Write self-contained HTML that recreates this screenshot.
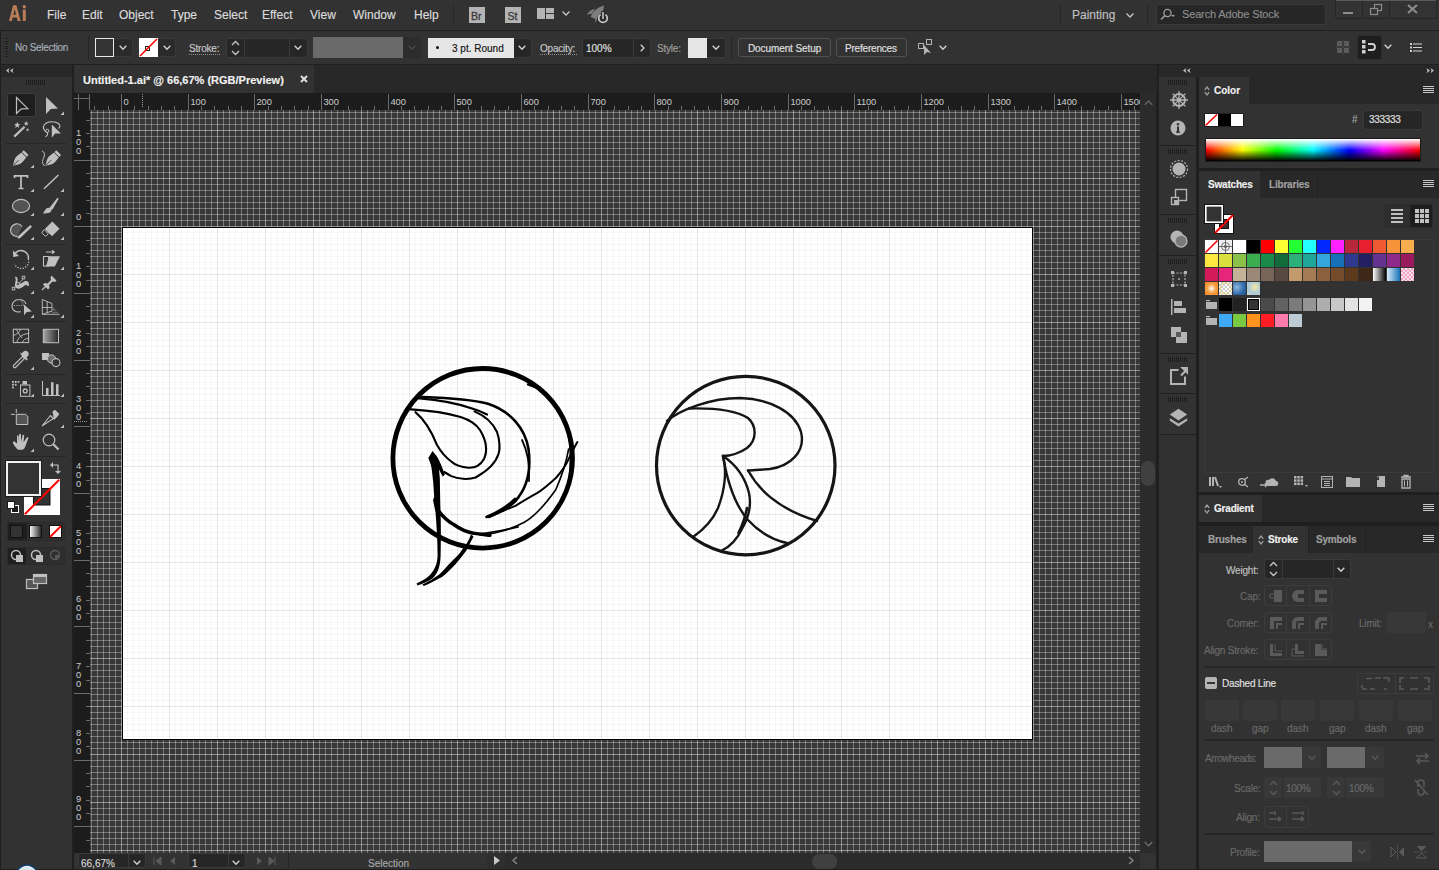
<!DOCTYPE html><html><head><meta charset="utf-8"><style>
*{margin:0;padding:0;box-sizing:border-box}
html,body{width:1439px;height:870px;overflow:hidden;background:#1f1f1f;font-family:"Liberation Sans",sans-serif}
.a{position:absolute}
.t{position:absolute;white-space:nowrap;line-height:1;-webkit-text-stroke:0.15px currentColor}
svg{position:absolute;overflow:visible}
.dd{position:absolute;border:1px solid #3c3c3c;border-radius:3px;background:#282828}
</style></head><body><div class="a" style="left:0px;top:0px;width:1439px;height:30px;background:#323232"></div>
<svg style="left:0px;top:0px;" width="30" height="30" viewBox="0 0 30 30"><path d="M9 21L13.1 5.2H16.4L20.7 21H17.7L16.8 17.4H12.7L11.8 21Z M13.4 14.7H16.1L14.75 8.9Z" fill="#b97d58" fill-rule="evenodd"/><rect x="22.8" y="9.6" width="3" height="11.4" fill="#b97d58"/><circle cx="24.3" cy="6.7" r="1.7" fill="#b97d58"/></svg>
<div class="t" style="left:47px;top:9px;font-size:12px;color:#dcdcdc">File</div>
<div class="t" style="left:82px;top:9px;font-size:12px;color:#dcdcdc">Edit</div>
<div class="t" style="left:119px;top:9px;font-size:12px;color:#dcdcdc">Object</div>
<div class="t" style="left:171px;top:9px;font-size:12px;color:#dcdcdc">Type</div>
<div class="t" style="left:214px;top:9px;font-size:12px;color:#dcdcdc">Select</div>
<div class="t" style="left:262px;top:9px;font-size:12px;color:#dcdcdc">Effect</div>
<div class="t" style="left:310px;top:9px;font-size:12px;color:#dcdcdc">View</div>
<div class="t" style="left:353px;top:9px;font-size:12px;color:#dcdcdc">Window</div>
<div class="t" style="left:414px;top:9px;font-size:12px;color:#dcdcdc">Help</div>
<div class="a" style="left:453px;top:5px;width:1px;height:19px;background:#262626"></div>
<div class="a" style="left:469px;top:7px;width:16px;height:16px;background:#b4b4b4"><div class="t" style="left:2px;top:4px;font-size:10.5px;color:#3a3a3a;-webkit-text-stroke:0.3px #3a3a3a">Br</div></div>
<div class="a" style="left:505px;top:7px;width:16px;height:16px;background:#b4b4b4"><div class="t" style="left:2.5px;top:4px;font-size:10.5px;color:#3a3a3a;-webkit-text-stroke:0.3px #3a3a3a">St</div></div>
<svg style="left:537px;top:8px;" width="18" height="12" viewBox="0 0 18 12"><rect x="0" y="0" width="8" height="11" fill="#b4b4b4"/><rect x="9" y="0" width="8" height="5" fill="#b4b4b4"/><rect x="9" y="6" width="8" height="5" fill="#b4b4b4"/></svg>
<svg style="left:562px;top:11px;" width="8" height="5" viewBox="0 0 8 5"><path d="M0.5 0.5L4 4L7.5 0.5" stroke="#c8c8c8" stroke-width="1.3" fill="none"/></svg>
<svg style="left:0px;top:0px;" width="620" height="30" viewBox="0 0 620 30"><path d="M590.5 17C592.5 12 597.5 7 604.2 5.6C603.5 11 600.5 15.5 596 19Z" fill="#7e7e7e"/><path d="M586.8 14.8C588.8 11.5 591.5 9.3 595 9L592 13.5Z" fill="#7e7e7e"/><path d="M594.8 23L597.6 18.3L595.6 17.2Z" fill="#7e7e7e"/><circle cx="603" cy="18.6" r="5.6" fill="#2a2a2a"/><path d="M600.6 14.6A4.3 4.3 0 1 0 605.4 14.6" fill="none" stroke="#c8c8c8" stroke-width="1.7"/><rect x="601.2" y="11" width="3.6" height="9" fill="#2a2a2a"/><rect x="602.2" y="12" width="1.6" height="7" fill="#c8c8c8"/></svg>
<div class="a" style="left:1060px;top:5px;width:1px;height:19px;background:#262626"></div>
<div class="t" style="left:1072px;top:9px;font-size:12px;color:#c0c0c0">Painting</div>
<svg style="left:1126px;top:13px;" width="8" height="5" viewBox="0 0 8 5"><path d="M0.5 0.5L4 4L7.5 0.5" stroke="#c8c8c8" stroke-width="1.3" fill="none"/></svg>
<div class="a" style="left:1147px;top:5px;width:1px;height:19px;background:#262626"></div>
<div class="a" style="left:1156px;top:4px;width:170px;height:21px;background:#262626;border:1px solid #3a3a3a;border-radius:3px"></div>
<svg style="left:1160px;top:8px;" width="16" height="13" viewBox="0 0 16 13"><circle cx="7.5" cy="5" r="3.6" fill="none" stroke="#a0a0a0" stroke-width="1.3"/><path d="M5 7.5L1 11.5" stroke="#a0a0a0" stroke-width="1.6"/><path d="M11 7L15 7L13 9Z" fill="#a0a0a0"/></svg>
<div class="t" style="left:1182px;top:9px;font-size:11px;color:#8c8c8c;letter-spacing:-0.15px">Search Adobe Stock</div>
<div class="a" style="left:1335px;top:0px;width:102px;height:19px;background:#333;border:1px solid #262626;border-top:none;border-radius:0 0 3px 3px"></div>
<div class="a" style="left:1336px;top:0px;width:100px;height:1px;background:#5a5a5a"></div>
<div class="a" style="left:1362px;top:1px;width:1px;height:17px;background:#262626"></div>
<div class="a" style="left:1389px;top:1px;width:1px;height:17px;background:#262626"></div>
<div class="a" style="left:1343px;top:12px;width:10px;height:2px;background:#8c8c8c"></div>
<svg style="left:1370px;top:4px;" width="13" height="11" viewBox="0 0 13 11"><rect x="4.5" y="0.5" width="7" height="6" fill="none" stroke="#8c8c8c" stroke-width="1.2"/><rect x="0.5" y="4.5" width="7" height="6" fill="#333" stroke="#8c8c8c" stroke-width="1.2"/></svg>
<svg style="left:1407px;top:4px;" width="11" height="10" viewBox="0 0 11 10"><path d="M1 1L10 9M10 1L1 9" stroke="#8c8c8c" stroke-width="2"/></svg>
<div class="a" style="left:0px;top:30px;width:1439px;height:1px;background:#1f1f1f"></div>
<div class="a" style="left:1px;top:31px;width:1438px;height:33px;background:#323232"></div>
<div class="a" style="left:5px;top:38.0px;width:3px;height:1px;background:#1e1e1e"></div>
<div class="a" style="left:5px;top:40.5px;width:3px;height:1px;background:#1e1e1e"></div>
<div class="a" style="left:5px;top:43.0px;width:3px;height:1px;background:#1e1e1e"></div>
<div class="a" style="left:5px;top:45.5px;width:3px;height:1px;background:#1e1e1e"></div>
<div class="a" style="left:5px;top:48.0px;width:3px;height:1px;background:#1e1e1e"></div>
<div class="a" style="left:5px;top:50.5px;width:3px;height:1px;background:#1e1e1e"></div>
<div class="a" style="left:5px;top:53.0px;width:3px;height:1px;background:#1e1e1e"></div>
<div class="a" style="left:5px;top:55.5px;width:3px;height:1px;background:#1e1e1e"></div>
<div class="t" style="left:15px;top:43px;font-size:10px;color:#a8b0b8;letter-spacing:-0.3px">No Selection</div>
<div class="a" style="left:88px;top:36px;width:1px;height:24px;background:#262626"></div>
<div class="a" style="left:95px;top:38px;width:38px;height:19px;background:#2a2a2a;border:1px solid #3a3a3a;border-radius:2px"></div>
<div class="a" style="left:95px;top:38px;width:19px;height:19px;background:#333;border:1px solid #e8e8e8"></div>
<svg style="left:119px;top:45px;" width="8" height="5" viewBox="0 0 8 5"><path d="M0.7 0.7L4.0 4.2L7.3 0.7" stroke="#d0d0d0" stroke-width="1.4" fill="none"/></svg>
<div class="a" style="left:138px;top:38px;width:38px;height:19px;background:#2a2a2a;border:1px solid #3a3a3a;border-radius:2px"></div>
<div class="a" style="left:139px;top:38px;width:19px;height:19px;background:#fff"></div>
<svg style="left:139px;top:38px;" width="19" height="19" viewBox="0 0 19 19"><rect x="6.5" y="8.5" width="4" height="4" fill="none" stroke="#222" stroke-width="1"/><path d="M1 18L18 1" stroke="#f00" stroke-width="1.6"/></svg>
<svg style="left:163px;top:45px;" width="8" height="5" viewBox="0 0 8 5"><path d="M0.7 0.7L4.0 4.2L7.3 0.7" stroke="#d0d0d0" stroke-width="1.4" fill="none"/></svg>
<div class="t" style="left:189px;top:44px;font-size:10px;color:#c8c8c8;letter-spacing:-0.2px">Stroke:</div>
<div class="a" style="left:189px;top:54px;width:31px;height:1px;border-top:1px dotted #909090"></div>
<div class="a" style="left:226px;top:38px;width:82px;height:20px;background:#262626;border:1px solid #3a3a3a;border-radius:2px"></div>
<div class="a" style="left:244px;top:39px;width:1px;height:18px;background:#3a3a3a"></div>
<div class="a" style="left:289px;top:39px;width:1px;height:18px;background:#3a3a3a"></div>
<svg style="left:231px;top:40px;" width="9" height="16" viewBox="0 0 9 16"><path d="M1 5L4.5 1.5L8 5M1 11L4.5 14.5L8 11" stroke="#c8c8c8" stroke-width="1.3" fill="none"/></svg>
<svg style="left:294px;top:45px;" width="8" height="5" viewBox="0 0 8 5"><path d="M0.7 0.7L4.0 4.2L7.3 0.7" stroke="#d0d0d0" stroke-width="1.4" fill="none"/></svg>
<div class="a" style="left:313px;top:37px;width:108px;height:21px;background:#2c2c2c;border-radius:2px"></div>
<div class="a" style="left:313px;top:37px;width:90px;height:21px;background:#6a6a6a"></div>
<svg style="left:408px;top:45px;" width="8" height="5" viewBox="0 0 8 5"><path d="M0.7 0.7L4.0 4.2L7.3 0.7" stroke="#4a4a4a" stroke-width="1.4" fill="none"/></svg>
<div class="a" style="left:427px;top:38px;width:105px;height:20px;background:#262626;border:1px solid #3a3a3a;border-radius:2px"></div>
<div class="a" style="left:428px;top:38px;width:86px;height:20px;background:#e6e6e6"></div>
<div class="a" style="left:436px;top:46px;width:3px;height:3px;background:#111;border-radius:2px"></div>
<div class="t" style="left:452px;top:44px;font-size:10px;color:#111">3 pt. Round</div>
<svg style="left:518px;top:45px;" width="8" height="5" viewBox="0 0 8 5"><path d="M0.7 0.7L4.0 4.2L7.3 0.7" stroke="#d0d0d0" stroke-width="1.4" fill="none"/></svg>
<div class="t" style="left:540px;top:44px;font-size:10px;color:#c8c8c8;letter-spacing:-0.2px">Opacity:</div>
<div class="a" style="left:540px;top:54px;width:37px;height:1px;border-top:1px dotted #909090"></div>
<div class="a" style="left:582px;top:38px;width:69px;height:20px;background:#262626;border:1px solid #3a3a3a;border-radius:2px"></div>
<div class="a" style="left:633px;top:39px;width:1px;height:18px;background:#3a3a3a"></div>
<div class="t" style="left:586px;top:44px;font-size:10px;color:#e0e0e0">100%</div>
<svg style="left:640px;top:44px;" width="5" height="8" viewBox="0 0 5 8"><path d="M0.7 0.7L4 4L0.7 7.3" stroke="#d0d0d0" stroke-width="1.3" fill="none"/></svg>
<div class="t" style="left:657px;top:44px;font-size:10px;color:#a0a0a0;letter-spacing:-0.2px">Style:</div>
<div class="a" style="left:687px;top:38px;width:39px;height:20px;background:#262626;border:1px solid #3a3a3a;border-radius:2px"></div>
<div class="a" style="left:688px;top:38px;width:19px;height:20px;background:#e6e6e6"></div>
<svg style="left:712px;top:45px;" width="8" height="5" viewBox="0 0 8 5"><path d="M0.7 0.7L4.0 4.2L7.3 0.7" stroke="#d0d0d0" stroke-width="1.4" fill="none"/></svg>
<div class="a" style="left:731px;top:36px;width:1px;height:24px;background:#262626"></div>
<div class="a" style="left:738px;top:38px;width:93px;height:19px;border:1px solid #505050;border-radius:3px"></div>
<div class="t" style="left:748px;top:44px;font-size:10px;color:#e0e0e0;letter-spacing:-0.1px">Document Setup</div>
<div class="a" style="left:836px;top:38px;width:71px;height:19px;border:1px solid #505050;border-radius:3px"></div>
<div class="t" style="left:845px;top:44px;font-size:10px;color:#e0e0e0;letter-spacing:-0.2px">Preferences</div>
<svg style="left:917px;top:38px;" width="18" height="18" viewBox="0 0 18 18"><rect x="1.5" y="5.5" width="5" height="5" fill="none" stroke="#b4b4b4"/><rect x="9.5" y="1.5" width="5" height="5" fill="none" stroke="#b4b4b4"/><path d="M7 7L7 17L10 14L14 15Z" fill="#b4b4b4"/></svg>
<svg style="left:939px;top:45px;" width="8" height="5" viewBox="0 0 8 5"><path d="M0.7 0.7L4.0 4.2L7.3 0.7" stroke="#d0d0d0" stroke-width="1.4" fill="none"/></svg>
<svg style="left:1335px;top:39px;" width="16" height="16" viewBox="0 0 16 16"><rect x="2" y="2" width="5" height="5" fill="#5c5c5c"/><rect x="9" y="2" width="5" height="5" fill="#5c5c5c"/><rect x="2" y="9" width="5" height="5" fill="#5c5c5c"/><rect x="9" y="9" width="5" height="5" fill="#5c5c5c"/><path d="M8 0V16M0 8H16" stroke="#4a4a4a" stroke-width="0.8"/></svg>
<div class="a" style="left:1357px;top:35px;width:25px;height:25px;background:#1e1e1e;border:1px solid #2c2c2c;border-radius:3px"></div>
<svg style="left:1361px;top:39px;" width="16" height="16" viewBox="0 0 16 16"><rect x="1" y="1" width="3.5" height="3.5" fill="#d0d0d0"/><rect x="1" y="6" width="3.5" height="3.5" fill="#d0d0d0"/><rect x="1" y="11" width="3.5" height="3.5" fill="#d0d0d0"/><path d="M7 5H11A3 3 0 0 1 11 11H7" stroke="#d0d0d0" stroke-width="1.8" fill="none"/></svg>
<svg style="left:1384px;top:44px;" width="8" height="5" viewBox="0 0 8 5"><path d="M0.7 0.7L4.0 4.2L7.3 0.7" stroke="#d0d0d0" stroke-width="1.4" fill="none"/></svg>
<svg style="left:1410px;top:43px;" width="12" height="9" viewBox="0 0 12 9"><rect x="0" y="0" width="2" height="2" fill="#d0d0d0"/><rect x="0" y="3.5" width="2" height="2" fill="#d0d0d0"/><rect x="0" y="7" width="2" height="2" fill="#d0d0d0"/><path d="M3 1H12M3 4.5H12M3 8H12" stroke="#d0d0d0" stroke-width="1"/></svg>
<div class="a" style="left:74px;top:65px;width:1083px;height:28px;background:#282828"></div>
<div class="a" style="left:74px;top:65px;width:240px;height:28px;background:#323232"></div>
<div class="t" style="left:83px;top:75px;font-size:11px;font-weight:bold;color:#f0f0f0">Untitled-1.ai* @ 66,67% (RGB/Preview)</div>
<svg style="left:300px;top:75px;" width="8" height="8" viewBox="0 0 8 8"><path d="M1 1L7 7M7 1L1 7" stroke="#e0e0e0" stroke-width="2"/></svg>
<div class="a" style="left:74px;top:93px;width:1066px;height:17px;background:#1c1c1c"></div>
<div class="a" style="left:74px;top:110px;width:16px;height:743px;background:#1c1c1c"></div>
<svg style="left:74px;top:93px;" width="17" height="17" viewBox="0 0 17 17"><path d="M4.5 1V17M15.5 1V17M0 5.5H16" stroke="#6c6c6c" stroke-width="1" fill="none"/></svg>
<div class="a" style="left:1140px;top:93px;width:16px;height:760px;background:#2b2b2b"></div>
<svg style="left:1144px;top:100px;" width="9" height="6" viewBox="0 0 9 6"><path d="M0.7 4.8L4.5 1L8.3 4.8" stroke="#707070" stroke-width="1.2" fill="none"/></svg>
<svg style="left:1144px;top:841px;" width="9" height="6" viewBox="0 0 9 6"><path d="M0.7 1L4.5 4.8L8.3 1" stroke="#707070" stroke-width="1.2" fill="none"/></svg>
<div class="a" style="left:1141px;top:461px;width:14px;height:25px;background:#404040;border-radius:7px"></div>
<svg style="left:90px;top:110px;overflow:hidden" width="1050" height="743" viewBox="0 0 1050 743"><rect width="1050" height="743" fill="#373737"/><path d="M1.5 0V743M7.5 0V743M13.5 0V743M19.5 0V743M25.5 0V743M37.5 0V743M43.5 0V743M49.5 0V743M55.5 0V743M61.5 0V743M67.5 0V743M73.5 0V743M85.5 0V743M91.5 0V743M97.5 0V743M103.5 0V743M109.5 0V743M115.5 0V743M121.5 0V743M133.5 0V743M139.5 0V743M145.5 0V743M151.5 0V743M157.5 0V743M163.5 0V743M169.5 0V743M181.5 0V743M187.5 0V743M193.5 0V743M199.5 0V743M205.5 0V743M211.5 0V743M217.5 0V743M229.5 0V743M235.5 0V743M241.5 0V743M247.5 0V743M253.5 0V743M259.5 0V743M265.5 0V743M277.5 0V743M283.5 0V743M289.5 0V743M295.5 0V743M301.5 0V743M307.5 0V743M313.5 0V743M325.5 0V743M331.5 0V743M337.5 0V743M343.5 0V743M349.5 0V743M355.5 0V743M361.5 0V743M373.5 0V743M379.5 0V743M385.5 0V743M391.5 0V743M397.5 0V743M403.5 0V743M409.5 0V743M421.5 0V743M427.5 0V743M433.5 0V743M439.5 0V743M445.5 0V743M451.5 0V743M457.5 0V743M469.5 0V743M475.5 0V743M481.5 0V743M487.5 0V743M493.5 0V743M499.5 0V743M505.5 0V743M517.5 0V743M523.5 0V743M529.5 0V743M535.5 0V743M541.5 0V743M547.5 0V743M553.5 0V743M565.5 0V743M571.5 0V743M577.5 0V743M583.5 0V743M589.5 0V743M595.5 0V743M601.5 0V743M613.5 0V743M619.5 0V743M625.5 0V743M631.5 0V743M637.5 0V743M643.5 0V743M649.5 0V743M661.5 0V743M667.5 0V743M673.5 0V743M679.5 0V743M685.5 0V743M691.5 0V743M697.5 0V743M709.5 0V743M715.5 0V743M721.5 0V743M727.5 0V743M733.5 0V743M739.5 0V743M745.5 0V743M757.5 0V743M763.5 0V743M769.5 0V743M775.5 0V743M781.5 0V743M787.5 0V743M793.5 0V743M805.5 0V743M811.5 0V743M817.5 0V743M823.5 0V743M829.5 0V743M835.5 0V743M841.5 0V743M853.5 0V743M859.5 0V743M865.5 0V743M871.5 0V743M877.5 0V743M883.5 0V743M889.5 0V743M901.5 0V743M907.5 0V743M913.5 0V743M919.5 0V743M925.5 0V743M931.5 0V743M937.5 0V743M949.5 0V743M955.5 0V743M961.5 0V743M967.5 0V743M973.5 0V743M979.5 0V743M985.5 0V743M997.5 0V743M1003.5 0V743M1009.5 0V743M1015.5 0V743M1021.5 0V743M1027.5 0V743M1033.5 0V743M1045.5 0V743" stroke="rgba(255,255,255,0.32)" stroke-width="1"/><path d="M0 2.5H1050M0 8.5H1050M0 14.5H1050M0 26.5H1050M0 32.5H1050M0 38.5H1050M0 44.5H1050M0 50.5H1050M0 56.5H1050M0 62.5H1050M0 74.5H1050M0 80.5H1050M0 86.5H1050M0 92.5H1050M0 98.5H1050M0 104.5H1050M0 110.5H1050M0 122.5H1050M0 128.5H1050M0 134.5H1050M0 140.5H1050M0 146.5H1050M0 152.5H1050M0 158.5H1050M0 170.5H1050M0 176.5H1050M0 182.5H1050M0 188.5H1050M0 194.5H1050M0 200.5H1050M0 206.5H1050M0 218.5H1050M0 224.5H1050M0 230.5H1050M0 236.5H1050M0 242.5H1050M0 248.5H1050M0 254.5H1050M0 266.5H1050M0 272.5H1050M0 278.5H1050M0 284.5H1050M0 290.5H1050M0 296.5H1050M0 302.5H1050M0 314.5H1050M0 320.5H1050M0 326.5H1050M0 332.5H1050M0 338.5H1050M0 344.5H1050M0 350.5H1050M0 362.5H1050M0 368.5H1050M0 374.5H1050M0 380.5H1050M0 386.5H1050M0 392.5H1050M0 398.5H1050M0 410.5H1050M0 416.5H1050M0 422.5H1050M0 428.5H1050M0 434.5H1050M0 440.5H1050M0 446.5H1050M0 458.5H1050M0 464.5H1050M0 470.5H1050M0 476.5H1050M0 482.5H1050M0 488.5H1050M0 494.5H1050M0 506.5H1050M0 512.5H1050M0 518.5H1050M0 524.5H1050M0 530.5H1050M0 536.5H1050M0 542.5H1050M0 554.5H1050M0 560.5H1050M0 566.5H1050M0 572.5H1050M0 578.5H1050M0 584.5H1050M0 590.5H1050M0 602.5H1050M0 608.5H1050M0 614.5H1050M0 620.5H1050M0 626.5H1050M0 632.5H1050M0 638.5H1050M0 650.5H1050M0 656.5H1050M0 662.5H1050M0 668.5H1050M0 674.5H1050M0 680.5H1050M0 686.5H1050M0 698.5H1050M0 704.5H1050M0 710.5H1050M0 716.5H1050M0 722.5H1050M0 728.5H1050M0 734.5H1050" stroke="rgba(255,255,255,0.32)" stroke-width="1"/><path d="M31.5 0V743M79.5 0V743M127.5 0V743M175.5 0V743M223.5 0V743M271.5 0V743M319.5 0V743M367.5 0V743M415.5 0V743M463.5 0V743M511.5 0V743M559.5 0V743M607.5 0V743M655.5 0V743M703.5 0V743M751.5 0V743M799.5 0V743M847.5 0V743M895.5 0V743M943.5 0V743M991.5 0V743M1039.5 0V743" stroke="rgba(255,255,255,0.45)" stroke-width="1"/><path d="M0 20.5H1050M0 68.5H1050M0 116.5H1050M0 164.5H1050M0 212.5H1050M0 260.5H1050M0 308.5H1050M0 356.5H1050M0 404.5H1050M0 452.5H1050M0 500.5H1050M0 548.5H1050M0 596.5H1050M0 644.5H1050M0 692.5H1050M0 740.5H1050" stroke="rgba(255,255,255,0.45)" stroke-width="1"/></svg>
<svg style="left:122px;top:227px;" width="911" height="513" viewBox="0 0 911 513"><rect width="911" height="513" fill="#fff"/><path d="M5.5 1V512M11.5 1V512M17.5 1V512M23.5 1V512M29.5 1V512M35.5 1V512M41.5 1V512M53.5 1V512M59.5 1V512M65.5 1V512M71.5 1V512M77.5 1V512M83.5 1V512M89.5 1V512M101.5 1V512M107.5 1V512M113.5 1V512M119.5 1V512M125.5 1V512M131.5 1V512M137.5 1V512M149.5 1V512M155.5 1V512M161.5 1V512M167.5 1V512M173.5 1V512M179.5 1V512M185.5 1V512M197.5 1V512M203.5 1V512M209.5 1V512M215.5 1V512M221.5 1V512M227.5 1V512M233.5 1V512M245.5 1V512M251.5 1V512M257.5 1V512M263.5 1V512M269.5 1V512M275.5 1V512M281.5 1V512M293.5 1V512M299.5 1V512M305.5 1V512M311.5 1V512M317.5 1V512M323.5 1V512M329.5 1V512M341.5 1V512M347.5 1V512M353.5 1V512M359.5 1V512M365.5 1V512M371.5 1V512M377.5 1V512M389.5 1V512M395.5 1V512M401.5 1V512M407.5 1V512M413.5 1V512M419.5 1V512M425.5 1V512M437.5 1V512M443.5 1V512M449.5 1V512M455.5 1V512M461.5 1V512M467.5 1V512M473.5 1V512M485.5 1V512M491.5 1V512M497.5 1V512M503.5 1V512M509.5 1V512M515.5 1V512M521.5 1V512M533.5 1V512M539.5 1V512M545.5 1V512M551.5 1V512M557.5 1V512M563.5 1V512M569.5 1V512M581.5 1V512M587.5 1V512M593.5 1V512M599.5 1V512M605.5 1V512M611.5 1V512M617.5 1V512M629.5 1V512M635.5 1V512M641.5 1V512M647.5 1V512M653.5 1V512M659.5 1V512M665.5 1V512M677.5 1V512M683.5 1V512M689.5 1V512M695.5 1V512M701.5 1V512M707.5 1V512M713.5 1V512M725.5 1V512M731.5 1V512M737.5 1V512M743.5 1V512M749.5 1V512M755.5 1V512M761.5 1V512M773.5 1V512M779.5 1V512M785.5 1V512M791.5 1V512M797.5 1V512M803.5 1V512M809.5 1V512M821.5 1V512M827.5 1V512M833.5 1V512M839.5 1V512M845.5 1V512M851.5 1V512M857.5 1V512M869.5 1V512M875.5 1V512M881.5 1V512M887.5 1V512M893.5 1V512M899.5 1V512M905.5 1V512" stroke="rgba(0,0,0,0.03)" stroke-width="1"/><path d="M1 5.5H910M1 11.5H910M1 17.5H910M1 23.5H910M1 29.5H910M1 35.5H910M1 41.5H910M1 53.5H910M1 59.5H910M1 65.5H910M1 71.5H910M1 77.5H910M1 83.5H910M1 89.5H910M1 101.5H910M1 107.5H910M1 113.5H910M1 119.5H910M1 125.5H910M1 131.5H910M1 137.5H910M1 149.5H910M1 155.5H910M1 161.5H910M1 167.5H910M1 173.5H910M1 179.5H910M1 185.5H910M1 197.5H910M1 203.5H910M1 209.5H910M1 215.5H910M1 221.5H910M1 227.5H910M1 233.5H910M1 245.5H910M1 251.5H910M1 257.5H910M1 263.5H910M1 269.5H910M1 275.5H910M1 281.5H910M1 293.5H910M1 299.5H910M1 305.5H910M1 311.5H910M1 317.5H910M1 323.5H910M1 329.5H910M1 341.5H910M1 347.5H910M1 353.5H910M1 359.5H910M1 365.5H910M1 371.5H910M1 377.5H910M1 389.5H910M1 395.5H910M1 401.5H910M1 407.5H910M1 413.5H910M1 419.5H910M1 425.5H910M1 437.5H910M1 443.5H910M1 449.5H910M1 455.5H910M1 461.5H910M1 467.5H910M1 473.5H910M1 485.5H910M1 491.5H910M1 497.5H910M1 503.5H910M1 509.5H910" stroke="rgba(0,0,0,0.03)" stroke-width="1"/><path d="M47.5 1V512M95.5 1V512M143.5 1V512M191.5 1V512M239.5 1V512M287.5 1V512M335.5 1V512M383.5 1V512M431.5 1V512M479.5 1V512M527.5 1V512M575.5 1V512M623.5 1V512M671.5 1V512M719.5 1V512M767.5 1V512M815.5 1V512M863.5 1V512" stroke="rgba(0,0,0,0.09)" stroke-width="1"/><path d="M1 47.5H910M1 95.5H910M1 143.5H910M1 191.5H910M1 239.5H910M1 287.5H910M1 335.5H910M1 383.5H910M1 431.5H910M1 479.5H910" stroke="rgba(0,0,0,0.09)" stroke-width="1"/><rect x="0.5" y="0.5" width="910" height="512" fill="none" stroke="#000" stroke-width="1"/></svg>
<svg style="left:74px;top:93px;overflow:hidden" width="1066" height="17" viewBox="0 0 1066 17"><path d="M20.5 13V17M34.5 13V17M47.5 1V17M60.5 13V17M74.5 13V17M87.5 13V17M100.5 13V17M114.5 1V17M127.5 13V17M140.5 13V17M154.5 13V17M167.5 13V17M180.5 1V17M194.5 13V17M207.5 13V17M220.5 13V17M234.5 13V17M247.5 1V17M260.5 13V17M274.5 13V17M287.5 13V17M300.5 13V17M314.5 1V17M327.5 13V17M340.5 13V17M354.5 13V17M367.5 13V17M380.5 1V17M394.5 13V17M407.5 13V17M420.5 13V17M434.5 13V17M447.5 1V17M460.5 13V17M474.5 13V17M487.5 13V17M500.5 13V17M514.5 1V17M527.5 13V17M540.5 13V17M554.5 13V17M567.5 13V17M580.5 1V17M594.5 13V17M607.5 13V17M620.5 13V17M634.5 13V17M647.5 1V17M660.5 13V17M674.5 13V17M687.5 13V17M700.5 13V17M714.5 1V17M727.5 13V17M740.5 13V17M754.5 13V17M767.5 13V17M780.5 1V17M794.5 13V17M807.5 13V17M820.5 13V17M834.5 13V17M847.5 1V17M860.5 13V17M874.5 13V17M887.5 13V17M900.5 13V17M914.5 1V17M927.5 13V17M940.5 13V17M954.5 13V17M967.5 13V17M980.5 1V17M994.5 13V17M1007.5 13V17M1020.5 13V17M1034.5 13V17M1047.5 1V17M1060.5 13V17" stroke="#6c6c6c" stroke-width="1"/></svg>
<div class="a" style="left:74px;top:93px;width:1066px;height:17px;overflow:hidden"><div class="t" style="left:49.5px;top:4.6px;font-size:9.3px;color:#cccccc;letter-spacing:-0.1px;-webkit-text-stroke:0">0</div><div class="t" style="left:116.5px;top:4.6px;font-size:9.3px;color:#cccccc;letter-spacing:-0.1px;-webkit-text-stroke:0">100</div><div class="t" style="left:182.5px;top:4.6px;font-size:9.3px;color:#cccccc;letter-spacing:-0.1px;-webkit-text-stroke:0">200</div><div class="t" style="left:249.5px;top:4.6px;font-size:9.3px;color:#cccccc;letter-spacing:-0.1px;-webkit-text-stroke:0">300</div><div class="t" style="left:316.5px;top:4.6px;font-size:9.3px;color:#cccccc;letter-spacing:-0.1px;-webkit-text-stroke:0">400</div><div class="t" style="left:382.5px;top:4.6px;font-size:9.3px;color:#cccccc;letter-spacing:-0.1px;-webkit-text-stroke:0">500</div><div class="t" style="left:449.5px;top:4.6px;font-size:9.3px;color:#cccccc;letter-spacing:-0.1px;-webkit-text-stroke:0">600</div><div class="t" style="left:516.5px;top:4.6px;font-size:9.3px;color:#cccccc;letter-spacing:-0.1px;-webkit-text-stroke:0">700</div><div class="t" style="left:582.5px;top:4.6px;font-size:9.3px;color:#cccccc;letter-spacing:-0.1px;-webkit-text-stroke:0">800</div><div class="t" style="left:649.5px;top:4.6px;font-size:9.3px;color:#cccccc;letter-spacing:-0.1px;-webkit-text-stroke:0">900</div><div class="t" style="left:716.5px;top:4.6px;font-size:9.3px;color:#cccccc;letter-spacing:-0.1px;-webkit-text-stroke:0">1000</div><div class="t" style="left:782.5px;top:4.6px;font-size:9.3px;color:#cccccc;letter-spacing:-0.1px;-webkit-text-stroke:0">1100</div><div class="t" style="left:849.5px;top:4.6px;font-size:9.3px;color:#cccccc;letter-spacing:-0.1px;-webkit-text-stroke:0">1200</div><div class="t" style="left:916.5px;top:4.6px;font-size:9.3px;color:#cccccc;letter-spacing:-0.1px;-webkit-text-stroke:0">1300</div><div class="t" style="left:982.5px;top:4.6px;font-size:9.3px;color:#cccccc;letter-spacing:-0.1px;-webkit-text-stroke:0">1400</div><div class="t" style="left:1049.5px;top:4.6px;font-size:9.3px;color:#cccccc;letter-spacing:-0.1px;-webkit-text-stroke:0">1500</div></div>
<div class="a" style="left:142px;top:94px;width:1px;height:13px;border-left:1px dotted #9a9a9a"></div>
<svg style="left:74px;top:421px;" width="14" height="1" viewBox="0 0 14 1"><rect x="0" y="0" width="1" height="1" fill="#9a9a9a"/><rect x="2" y="0" width="1" height="1" fill="#9a9a9a"/><rect x="4" y="0" width="1" height="1" fill="#9a9a9a"/><rect x="6" y="0" width="1" height="1" fill="#9a9a9a"/><rect x="8" y="0" width="1" height="1" fill="#9a9a9a"/><rect x="10" y="0" width="1" height="1" fill="#9a9a9a"/><rect x="12" y="0" width="1" height="1" fill="#9a9a9a"/></svg>
<svg style="left:74px;top:110px;overflow:hidden" width="16" height="743" viewBox="0 0 16 743"><path d="M12 10.5H16M12 23.5H16M12 36.5H16M0 50.5H16M12 63.5H16M12 76.5H16M12 90.5H16M12 103.5H16M0 116.5H16M12 130.5H16M12 143.5H16M12 156.5H16M12 170.5H16M0 183.5H16M12 196.5H16M12 210.5H16M12 223.5H16M12 236.5H16M0 250.5H16M12 263.5H16M12 276.5H16M12 290.5H16M12 303.5H16M0 316.5H16M12 330.5H16M12 343.5H16M12 356.5H16M12 370.5H16M0 383.5H16M12 396.5H16M12 410.5H16M12 423.5H16M12 436.5H16M0 450.5H16M12 463.5H16M12 476.5H16M12 490.5H16M12 503.5H16M0 516.5H16M12 530.5H16M12 543.5H16M12 556.5H16M12 570.5H16M0 583.5H16M12 596.5H16M12 610.5H16M12 623.5H16M12 636.5H16M0 650.5H16M12 663.5H16M12 676.5H16M12 690.5H16M12 703.5H16M0 716.5H16M12 730.5H16" stroke="#6c6c6c" stroke-width="1"/></svg>
<div class="t" style="left:76px;top:129.0px;font-size:9.3px;color:#cccccc;-webkit-text-stroke:0">1</div>
<div class="t" style="left:76px;top:138.0px;font-size:9.3px;color:#cccccc;-webkit-text-stroke:0">0</div>
<div class="t" style="left:76px;top:147.0px;font-size:9.3px;color:#cccccc;-webkit-text-stroke:0">0</div>
<div class="t" style="left:76px;top:213.0px;font-size:9.3px;color:#cccccc;-webkit-text-stroke:0">0</div>
<div class="t" style="left:76px;top:262.0px;font-size:9.3px;color:#cccccc;-webkit-text-stroke:0">1</div>
<div class="t" style="left:76px;top:271.0px;font-size:9.3px;color:#cccccc;-webkit-text-stroke:0">0</div>
<div class="t" style="left:76px;top:280.0px;font-size:9.3px;color:#cccccc;-webkit-text-stroke:0">0</div>
<div class="t" style="left:76px;top:329.0px;font-size:9.3px;color:#cccccc;-webkit-text-stroke:0">2</div>
<div class="t" style="left:76px;top:338.0px;font-size:9.3px;color:#cccccc;-webkit-text-stroke:0">0</div>
<div class="t" style="left:76px;top:347.0px;font-size:9.3px;color:#cccccc;-webkit-text-stroke:0">0</div>
<div class="t" style="left:76px;top:395.0px;font-size:9.3px;color:#cccccc;-webkit-text-stroke:0">3</div>
<div class="t" style="left:76px;top:404.0px;font-size:9.3px;color:#cccccc;-webkit-text-stroke:0">0</div>
<div class="t" style="left:76px;top:413.0px;font-size:9.3px;color:#cccccc;-webkit-text-stroke:0">0</div>
<div class="t" style="left:76px;top:462.0px;font-size:9.3px;color:#cccccc;-webkit-text-stroke:0">4</div>
<div class="t" style="left:76px;top:471.0px;font-size:9.3px;color:#cccccc;-webkit-text-stroke:0">0</div>
<div class="t" style="left:76px;top:480.0px;font-size:9.3px;color:#cccccc;-webkit-text-stroke:0">0</div>
<div class="t" style="left:76px;top:529.0px;font-size:9.3px;color:#cccccc;-webkit-text-stroke:0">5</div>
<div class="t" style="left:76px;top:538.0px;font-size:9.3px;color:#cccccc;-webkit-text-stroke:0">0</div>
<div class="t" style="left:76px;top:547.0px;font-size:9.3px;color:#cccccc;-webkit-text-stroke:0">0</div>
<div class="t" style="left:76px;top:595.0px;font-size:9.3px;color:#cccccc;-webkit-text-stroke:0">6</div>
<div class="t" style="left:76px;top:604.0px;font-size:9.3px;color:#cccccc;-webkit-text-stroke:0">0</div>
<div class="t" style="left:76px;top:613.0px;font-size:9.3px;color:#cccccc;-webkit-text-stroke:0">0</div>
<div class="t" style="left:76px;top:662.0px;font-size:9.3px;color:#cccccc;-webkit-text-stroke:0">7</div>
<div class="t" style="left:76px;top:671.0px;font-size:9.3px;color:#cccccc;-webkit-text-stroke:0">0</div>
<div class="t" style="left:76px;top:680.0px;font-size:9.3px;color:#cccccc;-webkit-text-stroke:0">0</div>
<div class="t" style="left:76px;top:729.0px;font-size:9.3px;color:#cccccc;-webkit-text-stroke:0">8</div>
<div class="t" style="left:76px;top:738.0px;font-size:9.3px;color:#cccccc;-webkit-text-stroke:0">0</div>
<div class="t" style="left:76px;top:747.0px;font-size:9.3px;color:#cccccc;-webkit-text-stroke:0">0</div>
<div class="t" style="left:76px;top:795.0px;font-size:9.3px;color:#cccccc;-webkit-text-stroke:0">9</div>
<div class="t" style="left:76px;top:804.0px;font-size:9.3px;color:#cccccc;-webkit-text-stroke:0">0</div>
<div class="t" style="left:76px;top:813.0px;font-size:9.3px;color:#cccccc;-webkit-text-stroke:0">0</div>
<div class="a" style="left:74px;top:853px;width:1082px;height:16px;background:#323232"></div>
<div class="a" style="left:505px;top:853px;width:635px;height:16px;background:#2b2b2b"></div>
<div class="a" style="left:487px;top:853px;width:18px;height:16px;background:#2e2e2e"></div>
<div class="a" style="left:74px;top:869px;width:1082px;height:1px;background:#1f1f1f"></div>
<div class="a" style="left:78px;top:853px;width:68px;height:15px;background:#262626;border:1px solid #3a3a3a;border-radius:2px"></div>
<div class="a" style="left:128px;top:854px;width:1px;height:14px;background:#3a3a3a"></div>
<div class="t" style="left:81px;top:859px;font-size:10px;color:#d8d8d8">66,67%</div>
<svg style="left:133px;top:860px;" width="8" height="5" viewBox="0 0 8 5"><path d="M0.7 0.7L4.0 4.2L7.3 0.7" stroke="#d0d0d0" stroke-width="1.4" fill="none"/></svg>
<svg style="left:153px;top:856px;" width="30" height="10" viewBox="0 0 30 10"><path d="M1 1V9M8 1L3 5L8 9Z" fill="#5a5a5a" stroke="#5a5a5a"/><path d="M22 1L17 5L22 9Z" fill="#5a5a5a"/></svg>
<div class="a" style="left:188px;top:853px;width:58px;height:15px;background:#262626;border:1px solid #3a3a3a;border-radius:2px"></div>
<div class="a" style="left:228px;top:854px;width:1px;height:14px;background:#3a3a3a"></div>
<div class="t" style="left:192px;top:859px;font-size:10px;color:#d8d8d8">1</div>
<svg style="left:232px;top:860px;" width="8" height="5" viewBox="0 0 8 5"><path d="M0.7 0.7L4.0 4.2L7.3 0.7" stroke="#d0d0d0" stroke-width="1.4" fill="none"/></svg>
<svg style="left:255px;top:856px;" width="26" height="10" viewBox="0 0 26 10"><path d="M2 1L7 5L2 9Z" fill="#5a5a5a"/><path d="M14 1L19 5L14 9ZM20 1V9" fill="#5a5a5a" stroke="#5a5a5a"/></svg>
<div class="a" style="left:288px;top:852px;width:1px;height:16px;background:#262626"></div>
<div class="t" style="left:368px;top:859px;font-size:10px;color:#a8a8a8">Selection</div>
<svg style="left:494px;top:856px;" width="6" height="9" viewBox="0 0 6 9"><path d="M0 0L6 4.5L0 9Z" fill="#c8c8c8"/></svg>
<svg style="left:512px;top:856px;" width="6" height="9" viewBox="0 0 6 9"><path d="M5 1L1 4.5L5 8" stroke="#8a8a8a" stroke-width="1.3" fill="none"/></svg>
<div class="a" style="left:812px;top:854px;width:25px;height:15px;background:#404040;border-radius:7px"></div>
<svg style="left:1128px;top:856px;" width="6" height="9" viewBox="0 0 6 9"><path d="M1 1L5 4.5L1 8" stroke="#8a8a8a" stroke-width="1.3" fill="none"/></svg>
<div class="a" style="left:1140px;top:853px;width:16px;height:16px;background:#333"></div>
<svg style="left:0px;top:0px;left:0;top:0;pointer-events:none" width="1439" height="870" viewBox="0 0 1439 870">
<g fill="none" stroke="#000" stroke-linecap="round" stroke-linejoin="round">
<circle cx="482.7" cy="458.3" r="89.8" stroke-width="4.8"/>
<path d="M418.9 396.8 C440 397.5 467 398 488 403.8 C510 411 525 428 528.5 449 C531 468 528 487 515.4 500.8 C507 509 497 514 487.6 516.7" stroke-width="2.6"/>
<path d="M522 440 C527 450 530 464 529 481" stroke-width="1.8"/>
<path d="M528 384.5 L536 387.5" stroke-width="2.4"/>
<path d="M503 511 C510 507 515 503 519 497" stroke-width="1.6"/>
<path d="M417.5 398.2 C440 400 460 404 474.5 409.3 C480 411 484 413 487 414.5" stroke-width="2.2"/>
<path d="M474.5 411.4 C485 416 493 423 497 432 C500 440 500 450 498.5 454 C496 462 489 470 475.6 477.5 C468 480 458 479 451.3 476.1 C448 474.5 446 473 444.3 472" stroke-width="2.1"/>
<path d="M409.2 409.3 C420 410 440 411 460.6 417 C470 420 476 424 480 430 C486 440 488 450 484 459 C480 466 475 468 468.6 467.8 C460 467 455 465 451.3 461.5 C445 457 441 452 437 445 C433 435 425 420 415.4 412.1" stroke-width="2.1"/>
<path d="M438.9 511.4 C444 518 449 522 453.7 524.5 C460 529 466 532 473.3 533.2 C480 534.5 486 535 490 535.4" stroke-width="3.4"/>
<path d="M480 535 C490 535 510 530 524.3 522.3 C535 516 545 505 555.9 489.5 C560 480 566 465 568.6 449" stroke-width="1.6"/>
<path d="M480 533.7 C490 533 505 530 518 526.8" stroke-width="1.8"/>
<path d="M488.9 517.3 C500 512 510 508 515.4 505.9 C525 500 530 497 537 493.2 C545 488 550 483 555.9 478 C562 471 566 465 568.6 459.1 C572 452 575 446 577.4 442" stroke-width="2"/>
<path d="M486.5 517 C496 513 506 508 515 499" stroke-width="2.6"/>
<path d="M567 430 C571 445 572 470 566 492" stroke-width="1.3"/>
</g>
<path d="M432.5 451 L428.3 458 C430 462 431.5 466 431.8 470 L433.2 482 L434.2 497 L433 500 L435.5 512 C436.5 525 437.6 540 437.6 556 C437.2 564 435 569 430 575 C427 578 422 581 416.5 583.5 L417.5 585.5 C423 584 429 581 433 578 C438 573 440.3 566 440.6 556 C441 540 441 520 440.3 505 L439.8 478 L439 469.5 L442.8 476.8 L444.8 474.5 C443 469 440 462 437 456.5 Z" fill="#000"/>
<path d="M471 534.4 C468 542 466 545 463.1 548.3 C459 555 455 558 451.9 561.2 C447 566 443 571 439.2 574.6 C433 579 428 582 422.3 584.4 L423.9 585.9 C430 583.5 436 580 442 577 C447 573 452 568 455.5 564.2 C460 559 463 555 466.1 550.9 C469 546 471 541 473.6 536.6 Z" fill="#000"/>
</svg>
<svg style="left:0px;top:0px;left:0;top:0;pointer-events:none" width="1439" height="870" viewBox="0 0 1439 870">
<g fill="none" stroke="#151515" stroke-linecap="round" stroke-linejoin="round">
<circle cx="745.75" cy="465.55" r="89.25" stroke-width="3.2"/>
<path d="M667 421 C680 410 710 398 740 398 C770 399 795 412 801 432 C806 452 790 466 770 469 C760 470 752 470 748 470.5" stroke-width="2.4"/>
<path d="M748 470.5 C758 488 775 508 817 521" stroke-width="2.4"/>
<path d="M689 408.5 C710 408 735 410 748 418 C757 426 757 440 747 448 C740 453 730 456 723 456" stroke-width="2.4"/>
<path d="M723 456 C727 470 725 490 718 508 C712 522 703 530 693 537" stroke-width="2.4"/>
<path d="M723 456 C735 464 745 477 749 493 C751.5 505 748 518 743 527 C737 540 730 547 721 551" stroke-width="2.4"/>
<path d="M723 456 C727 480 735 505 748 520 C760 533 773 540 787 543" stroke-width="2.4"/>
<path d="M747 508 C745.5 516 742 526 738.5 533" stroke-width="2.6"/>
</g></svg>
<div class="a" style="left:1px;top:65px;width:71px;height:12px;background:#282828"></div>
<svg style="left:6px;top:68px;" width="8" height="6" viewBox="0 0 8 6"><path d="M3.5 0L0 2.6L3.5 5.2L2.5 2.6Z M7.5 0L4 2.6L7.5 5.2L6.5 2.6Z" fill="#c0c0c0"/></svg>
<div class="a" style="left:1px;top:77px;width:71px;height:793px;background:#323232"></div>
<div class="a" style="left:26px;top:80px;width:1px;height:5px;background:#1e1e1e"></div>
<div class="a" style="left:28px;top:80px;width:1px;height:5px;background:#1e1e1e"></div>
<div class="a" style="left:30px;top:80px;width:1px;height:5px;background:#1e1e1e"></div>
<div class="a" style="left:32px;top:80px;width:1px;height:5px;background:#1e1e1e"></div>
<div class="a" style="left:34px;top:80px;width:1px;height:5px;background:#1e1e1e"></div>
<div class="a" style="left:36px;top:80px;width:1px;height:5px;background:#1e1e1e"></div>
<div class="a" style="left:38px;top:80px;width:1px;height:5px;background:#1e1e1e"></div>
<div class="a" style="left:40px;top:80px;width:1px;height:5px;background:#1e1e1e"></div>
<div class="a" style="left:42px;top:80px;width:1px;height:5px;background:#1e1e1e"></div>
<div class="a" style="left:44px;top:80px;width:1px;height:5px;background:#1e1e1e"></div>
<div class="a" style="left:7px;top:93px;width:29px;height:24px;background:#1e1e1e;border:1px solid #3e3e3e;border-radius:3px"></div>
<svg style="left:0px;top:0px;" width="72" height="600" viewBox="0 0 72 600"><path d="M16.5 97.5V113.5L21.3 108.8L27.8 108.6Z" fill="none" stroke="#c0c0c0" stroke-width="1.2"/><path d="M46 97V114L50.8 109L58 108.6Z" fill="#c0c0c0"/><path d="M14.2 136.6L24.6 126.8" stroke="#c0c0c0" stroke-width="2.2"/><path d="M17.2 121.8L18 124L20.4 124.2L18.6 125.6L19.2 127.9L17.2 126.6L15.2 127.9L15.8 125.6L14 124.2L16.4 124Z" fill="#c0c0c0"/><path d="M26.2 121L26.9 122.7L28.7 122.8L27.3 123.9L27.8 125.7L26.2 124.7L24.6 125.7L25.1 123.9L23.7 122.8L25.5 122.7Z" fill="#c0c0c0"/><path d="M27.6 128L28.1 129.2L29.4 129.3L28.4 130.1L28.7 131.4L27.6 130.6L26.5 131.4L26.8 130.1L25.8 129.3L27.1 129.2Z" fill="#c0c0c0"/><path d="M47 132.5C43.5 131 42.5 127 44.5 124.5C47.5 121 55 121 58.5 123.5C60.5 125 60 127.5 58.5 128.5" stroke="#c0c0c0" stroke-width="1.1" fill="none"/><circle cx="47.3" cy="130.8" r="1.6" fill="none" stroke="#c0c0c0" stroke-width="1"/><path d="M47.5 132.5C48 134.5 47 136 45.5 136.8" stroke="#c0c0c0" stroke-width="1.1" fill="none"/><path d="M51.8 124.5V137.7L55.2 133.6L61 133.4Z" fill="#c0c0c0"/><path d="M12.8 165.8L14.6 159.5C15.4 157.5 16.8 156 18.5 154.8L21.5 152.5L26.3 157.3L24 160.3C22.8 162 21.3 163.4 19.3 164.2Z" fill="#c0c0c0"/><path d="M21.5 152.5L23.8 150.2L28.6 155L26.3 157.3Z" fill="#c0c0c0"/><path d="M13.5 165.2L18.5 160.2" stroke="#323232" stroke-width="0.9"/><path d="M21.6 152.2L26.6 157.2" stroke="#323232" stroke-width="0.9"/><path d="M45.3 165.8L47.1 159.5C47.9 157.5 49.3 156 51 154.8L54 152.5L58.8 157.3L56.5 160.3C55.3 162 53.8 163.4 51.8 164.2Z" fill="#c0c0c0"/><path d="M54 152.5L56.3 150.2L61.1 155L58.8 157.3Z" fill="#c0c0c0"/><path d="M46 165.2L51 160.2" stroke="#323232" stroke-width="0.9"/><path d="M54.1 152.2L59.1 157.2" stroke="#323232" stroke-width="0.9"/><path d="M42 151C44.5 152 45 154 44 157C42.5 160.5 41.5 163 44.5 166" stroke="#c0c0c0" stroke-width="1" fill="none"/><path d="M14.5 178V175.8H27.5V178M21 175.8V188.5M18.5 188.5H23.5" stroke="#c0c0c0" stroke-width="1.7" fill="none"/><path d="M44 188.8L58.4 175" stroke="#c0c0c0" stroke-width="1.5"/><ellipse cx="21" cy="206" rx="8.6" ry="6.6" fill="#545454" stroke="#c0c0c0" stroke-width="1.1"/><path d="M49 208.5L57 198.3C57.8 197.5 58.8 197.9 58.5 199L52.4 209.8Z" fill="#c0c0c0"/><path d="M48.3 207.8C46 208 45 210.5 43 213.4C46 213.6 49.5 213.2 51 211.5C52 210.3 51.5 208.6 50.2 208Z" fill="#c0c0c0"/><path d="M22.2 226.5A6.4 6.4 0 1 0 17.6 236.6" fill="#545454" stroke="#c0c0c0" stroke-width="1.1"/><path d="M30.3 225L32 226.7L20 238.2L17.6 238.6L18.1 236.2Z" fill="#c0c0c0"/><path d="M52.3 221.5L59.5 228.7L52 236.2L44.8 229Z" fill="#c0c0c0"/><path d="M44.3 229.7L48.3 233.7L46.2 235.8C45.8 236.2 45.2 236.2 44.8 235.8L42.2 233.2C41.8 232.8 41.8 232.2 42.2 231.8Z" fill="none" stroke="#c0c0c0" stroke-width="1"/><path d="M14.6 254.5A7.3 7.3 0 0 1 28.3 259" stroke="#c0c0c0" stroke-width="1.6" fill="none"/><path d="M28.3 259A7.3 7.3 0 0 1 14.6 264" stroke="#c0c0c0" stroke-width="1.3" fill="none" stroke-dasharray="1.2 1.5"/><path d="M13 250.5L13.2 257L19 256Z" fill="#c0c0c0"/><path d="M46 252H53.5M52 250.3L54.3 252L52 253.7" stroke="#c0c0c0" stroke-width="1.1" fill="none"/><path d="M43.5 256.5H48.7V266H43.5Z" fill="none" stroke="#c0c0c0" stroke-width="1.1"/><path d="M49 256.2H60L54.8 266.4H46Z" fill="#c0c0c0"/><path d="M14.8 277C16.5 276 18 277.5 17.5 280C17 282 18.5 284 20.5 283.5C23 283 24 280.5 26.5 281C29 281.5 29.5 284.5 28.5 286.5C27.5 286 27 284.8 25.8 285C24 285.5 22 288.5 18.5 288.7C16 288.8 14.5 286.5 15 284C15.5 281 16.5 279 14.8 277Z" fill="#c0c0c0"/><path d="M13.2 289L23.8 278.5" stroke="#c0c0c0" stroke-width="0.9"/><rect x="12.2" y="287.3" width="2.6" height="2.6" fill="#323232" stroke="#c0c0c0" stroke-width="0.9"/><rect x="22.2" y="276.2" width="2.6" height="2.6" fill="#323232" stroke="#c0c0c0" stroke-width="0.9"/><circle cx="18" cy="284" r="1.5" fill="#323232" stroke="#c0c0c0" stroke-width="0.9"/><path d="M51.5 275.5L56.5 280.5L55 282L52.5 281.5L49 285L49.5 288L48 289.5L43 284.5L44.5 283L47.5 283.5L51 280L50.5 277.5Z" fill="#c0c0c0"/><path d="M42 290L46 286" stroke="#c0c0c0" stroke-width="1.3"/><path d="M20.5 311.5C17 313 12.5 311 12 307C11.5 302.5 15 299.5 19 299.5C22.5 299.5 25 301.5 26 304" stroke="#c0c0c0" stroke-width="1.1" fill="none"/><path d="M17.5 299.8C20.5 299.5 23 302 23 305" stroke="#7a7a7a" stroke-width="1" fill="none"/><circle cx="14.5" cy="305.5" r="0.6" fill="#c0c0c0"/><circle cx="16.8" cy="305.5" r="0.6" fill="#c0c0c0"/><circle cx="19.1" cy="305.5" r="0.6" fill="#c0c0c0"/><circle cx="21.4" cy="305.5" r="0.6" fill="#c0c0c0"/><circle cx="23.7" cy="305.5" r="0.6" fill="#c0c0c0"/><path d="M24 304.5V315.2L26.8 312L31.8 311.6Z" fill="#c0c0c0"/><path d="M42.3 299.5V314.3H59.5M42.3 299.5L52 303.5V311M42.3 307.5H52M47.2 301.5V313M42.3 314.3L52 311" stroke="#c0c0c0" stroke-width="0.9" fill="none"/><path d="M52 306.5L56.5 310.5H52Z" fill="#6a6a6a"/><path d="M52 312.3H58" stroke="#8a8a8a" stroke-width="0.8"/><rect x="13.3" y="329.2" width="15.3" height="13.4" fill="none" stroke="#c0c0c0" stroke-width="1"/><path d="M13.3 335.5C17 334.5 19.5 332 20.5 329.2M17 342.6C17.5 338 21.5 334 28.6 333.5M22.5 342.6C23 340 25 338.5 28.6 338.5M16 329.2C18 332 20 336 22 338" stroke="#c0c0c0" stroke-width="0.9" fill="none"/><defs><linearGradient id="gtool"><stop offset="0" stop-color="#a8a8a8"/><stop offset="1" stop-color="#262626"/></linearGradient></defs><rect x="43.3" y="329.3" width="15.2" height="13.4" fill="url(#gtool)" stroke="#c0c0c0" stroke-width="1"/><path d="M13.5 365.5L22.5 356.5L24.5 358.5L15.5 367.5C14.5 368.5 12.5 366.5 13.5 365.5Z" fill="none" stroke="#c0c0c0" stroke-width="1.1"/><path d="M21 355L26.5 360.5L28 359L26.5 357.5L28 356C29.5 354.5 28.5 352 27.5 351.5C26.5 350.5 24.5 350.5 23 352L21.5 353.5L20 352Z" fill="#c0c0c0"/><rect x="42" y="353" width="7" height="7" fill="#c0c0c0"/><circle cx="51.5" cy="359" r="4.2" fill="#6e6e6e" stroke="#c0c0c0" stroke-width="1"/><circle cx="56" cy="362.6" r="4" fill="#323232" stroke="#c0c0c0" stroke-width="1.1"/><rect x="12" y="381" width="1.8" height="1.8" fill="#c0c0c0"/><rect x="14.8" y="381" width="1.8" height="1.8" fill="#c0c0c0"/><rect x="17.6" y="381" width="1.8" height="1.8" fill="#c0c0c0"/><rect x="12" y="383.8" width="1.8" height="1.8" fill="#c0c0c0"/><rect x="14.8" y="383.8" width="1.8" height="1.8" fill="#c0c0c0"/><rect x="12" y="386.6" width="1.8" height="1.8" fill="#c0c0c0"/><rect x="20.5" y="385" width="9.4" height="11.3" fill="none" stroke="#c0c0c0" stroke-width="1"/><rect x="22.5" y="381" width="4.5" height="3.5" fill="#c0c0c0"/><circle cx="25.2" cy="390.9" r="1.9" fill="none" stroke="#c0c0c0" stroke-width="1.3"/><path d="M42.5 381V395.5H60" stroke="#c0c0c0" stroke-width="1" fill="none"/><rect x="46" y="388" width="2.5" height="7.5" fill="#c0c0c0"/><rect x="51" y="382.2" width="2.5" height="13.3" fill="#c0c0c0"/><rect x="56" y="384.2" width="2.5" height="11.3" fill="#c0c0c0"/><path d="M11 414.3H15M16.3 409V413" stroke="#c0c0c0" stroke-width="1" fill="none"/><path d="M16.3 414.3H25.5L27.8 416.5V424.5H16.3Z" fill="#545454" stroke="#c0c0c0" stroke-width="1"/><path d="M42 426L50.5 415.5L53.5 418.5Z" fill="none" stroke="#c0c0c0" stroke-width="1.1"/><path d="M52.5 411.5L55 409.7L59.3 414L57.5 416.5L54 420Z" fill="#c0c0c0"/><path d="M50.3 415.7L53.8 419.2" stroke="#c0c0c0" stroke-width="1"/><path d="M18 449.8C16 448 13.8 445.5 12.9 442.8C12.5 441.5 14 441 15 441.8L17 443.7V436C17 435 18.6 435 18.6 436V441.8L19.2 434.5C19.2 433.5 21 433.5 21 434.5V441.8L22.6 435.2C22.8 434.3 24.4 434.5 24.2 435.5L23.5 442.2L26.8 437.5C27.4 436.8 28.8 437.5 28.3 438.3L25.5 446C24.8 448 23.5 449.8 22 449.8Z" fill="#c0c0c0"/><circle cx="49" cy="440" r="5.8" fill="none" stroke="#c0c0c0" stroke-width="1.2"/><path d="M53.3 444.3L58.5 449.5" stroke="#c0c0c0" stroke-width="2.2"/><path d="M64 115V111.5L60.5 115Z" fill="#c0c0c0"/><path d="M34 168V164.5L30.5 168Z" fill="#c0c0c0"/><path d="M34 192V188.5L30.5 192Z" fill="#c0c0c0"/><path d="M64 192V188.5L60.5 192Z" fill="#c0c0c0"/><path d="M34 216V212.5L30.5 216Z" fill="#c0c0c0"/><path d="M64 216V212.5L60.5 216Z" fill="#c0c0c0"/><path d="M34 240V236.5L30.5 240Z" fill="#c0c0c0"/><path d="M64 240V236.5L60.5 240Z" fill="#c0c0c0"/><path d="M34 270V266.5L30.5 270Z" fill="#c0c0c0"/><path d="M64 270V266.5L60.5 270Z" fill="#c0c0c0"/><path d="M34 294V290.5L30.5 294Z" fill="#c0c0c0"/><path d="M64 294V290.5L60.5 294Z" fill="#c0c0c0"/><path d="M34 318V314.5L30.5 318Z" fill="#c0c0c0"/><path d="M64 318V314.5L60.5 318Z" fill="#c0c0c0"/><path d="M34 370V366.5L30.5 370Z" fill="#c0c0c0"/><path d="M34 397V393.5L30.5 397Z" fill="#c0c0c0"/><path d="M64 397V393.5L60.5 397Z" fill="#c0c0c0"/><path d="M64 428V424.5L60.5 428Z" fill="#c0c0c0"/><path d="M34 452V448.5L30.5 452Z" fill="#c0c0c0"/></svg>
<div class="a" style="left:6px;top:143px;width:60px;height:1px;background:#262626"></div>
<div class="a" style="left:6px;top:244px;width:60px;height:1px;background:#262626"></div>
<div class="a" style="left:6px;top:321px;width:60px;height:1px;background:#262626"></div>
<div class="a" style="left:6px;top:374px;width:60px;height:1px;background:#262626"></div>
<div class="a" style="left:6px;top:403px;width:60px;height:1px;background:#262626"></div>
<div class="a" style="left:6px;top:456px;width:60px;height:1px;background:#262626"></div>
<div class="a" style="left:7px;top:462px;width:34px;height:34px;background:#333;border:1px solid #f0f0f0"></div>
<div class="a" style="left:7px;top:462px;width:34px;height:34px;border:1px solid #f0f0f0;box-shadow:inset 0 0 0 1px #000"></div>
<svg style="left:24px;top:479px;" width="36" height="36" viewBox="0 0 36 36"><path d="M0 0H36V36H0Z M9.5 9.5V26H26V9.5Z" fill="#fff" fill-rule="evenodd"/><path d="M9.5 9.5H26V26H9.5Z" fill="#333"/><rect x="9.5" y="9.5" width="16.5" height="16.5" fill="none" stroke="#111"/><path d="M0.8 35.2L35.2 0.8" stroke="#f00" stroke-width="2"/></svg>
<div class="a" style="left:6px;top:461px;width:35px;height:35px;background:#333;border:2px solid #f0f0f0;box-shadow:0 0 0 1px #1a1a1a"></div>
<svg style="left:50px;top:462px;" width="12" height="12" viewBox="0 0 12 12"><path d="M2 3H8V9" stroke="#c0c0c0" stroke-width="1.2" fill="none"/><path d="M0 3L3 0V6Z" fill="#c0c0c0"/><path d="M8 12L5 9H11Z" fill="#c0c0c0"/></svg>
<svg style="left:7px;top:501px;" width="12" height="13" viewBox="0 0 12 13"><rect x="4.5" y="4.5" width="7" height="7" fill="#1a1a1a" stroke="#fff"/><rect x="0.5" y="0.5" width="7" height="7" fill="#fff" stroke="#1a1a1a"/></svg>
<div class="a" style="left:7px;top:522px;width:58px;height:19px;background:#2e2e2e;border:1px solid #2a2a2a;border-radius:3px"></div>
<div class="a" style="left:8px;top:523px;width:19px;height:17px;background:#1f1f1f"></div>
<div class="a" style="left:10px;top:525px;width:13px;height:13px;background:#333;border:1px solid #111"></div>
<svg style="left:29px;top:525px;" width="13" height="13" viewBox="0 0 13 13"><defs><linearGradient id="gt2"><stop offset="0" stroke="none" stop-color="#fff"/><stop offset="1" stop-color="#222"/></linearGradient></defs><rect x="0.5" y="0.5" width="12" height="12" fill="url(#gt2)" stroke="#111"/></svg>
<svg style="left:49px;top:525px;" width="13" height="13" viewBox="0 0 13 13"><rect x="0.5" y="0.5" width="12" height="12" fill="#fff" stroke="#111"/><path d="M1 12L12 1" stroke="#f00" stroke-width="2"/></svg>
<div class="a" style="left:7px;top:547px;width:58px;height:18px;background:#2e2e2e;border:1px solid #2a2a2a;border-radius:3px"></div>
<div class="a" style="left:8px;top:548px;width:18px;height:16px;background:#1f1f1f"></div>
<svg style="left:10px;top:549px;" width="14" height="14" viewBox="0 0 14 14"><circle cx="6" cy="6" r="4.5" fill="none" stroke="#c0c0c0" stroke-width="1.5"/><rect x="6" y="6" width="7" height="7" fill="#c0c0c0"/></svg>
<svg style="left:30px;top:549px;" width="14" height="14" viewBox="0 0 14 14"><circle cx="6" cy="6" r="4.5" fill="none" stroke="#c0c0c0" stroke-width="1.5"/><rect x="6" y="6" width="7" height="7" fill="#c0c0c0"/></svg>
<svg style="left:49px;top:549px;" width="14" height="14" viewBox="0 0 14 14"><circle cx="6" cy="6" r="4.5" fill="none" stroke="#5a5a5a" stroke-width="1.3"/><path d="M6 6H10.5A4.5 4.5 0 0 1 6 10.5Z" fill="#5a5a5a"/></svg>
<svg style="left:25px;top:573px;" width="24" height="17" viewBox="0 0 24 17"><rect x="1.5" y="6.5" width="11" height="9" fill="#555" stroke="#c0c0c0" stroke-width="1.2"/><rect x="8.5" y="1.5" width="13" height="9" fill="#666" stroke="#c0c0c0" stroke-width="1.2"/><rect x="9" y="2" width="12" height="2" fill="#c0c0c0"/></svg>
<div class="a" style="left:1159px;top:65px;width:280px;height:12px;background:#282828"></div>
<svg style="left:1183px;top:68px;" width="8" height="6" viewBox="0 0 8 6"><path d="M3.5 0L0 2.6L3.5 5.2L2.5 2.6Z M7.5 0L4 2.6L7.5 5.2L6.5 2.6Z" fill="#c0c0c0"/></svg>
<svg style="left:1426px;top:68px;" width="8" height="6" viewBox="0 0 8 6"><path d="M0.5 0L4 2.6L0.5 5.2L1.5 2.6Z M4.5 0L8 2.6L4.5 5.2L5.5 2.6Z" fill="#c0c0c0"/></svg>
<div class="a" style="left:1159px;top:77px;width:37px;height:68px;background:#323232"></div>
<div class="a" style="left:1168px;top:80px;width:1px;height:5px;background:#1e1e1e"></div>
<div class="a" style="left:1170px;top:80px;width:1px;height:5px;background:#1e1e1e"></div>
<div class="a" style="left:1172px;top:80px;width:1px;height:5px;background:#1e1e1e"></div>
<div class="a" style="left:1174px;top:80px;width:1px;height:5px;background:#1e1e1e"></div>
<div class="a" style="left:1176px;top:80px;width:1px;height:5px;background:#1e1e1e"></div>
<div class="a" style="left:1178px;top:80px;width:1px;height:5px;background:#1e1e1e"></div>
<div class="a" style="left:1180px;top:80px;width:1px;height:5px;background:#1e1e1e"></div>
<div class="a" style="left:1182px;top:80px;width:1px;height:5px;background:#1e1e1e"></div>
<div class="a" style="left:1184px;top:80px;width:1px;height:5px;background:#1e1e1e"></div>
<div class="a" style="left:1186px;top:80px;width:1px;height:5px;background:#1e1e1e"></div>
<div class="a" style="left:1159px;top:146px;width:37px;height:68px;background:#323232"></div>
<div class="a" style="left:1168px;top:149px;width:1px;height:5px;background:#1e1e1e"></div>
<div class="a" style="left:1170px;top:149px;width:1px;height:5px;background:#1e1e1e"></div>
<div class="a" style="left:1172px;top:149px;width:1px;height:5px;background:#1e1e1e"></div>
<div class="a" style="left:1174px;top:149px;width:1px;height:5px;background:#1e1e1e"></div>
<div class="a" style="left:1176px;top:149px;width:1px;height:5px;background:#1e1e1e"></div>
<div class="a" style="left:1178px;top:149px;width:1px;height:5px;background:#1e1e1e"></div>
<div class="a" style="left:1180px;top:149px;width:1px;height:5px;background:#1e1e1e"></div>
<div class="a" style="left:1182px;top:149px;width:1px;height:5px;background:#1e1e1e"></div>
<div class="a" style="left:1184px;top:149px;width:1px;height:5px;background:#1e1e1e"></div>
<div class="a" style="left:1186px;top:149px;width:1px;height:5px;background:#1e1e1e"></div>
<div class="a" style="left:1159px;top:215px;width:37px;height:40px;background:#323232"></div>
<div class="a" style="left:1168px;top:218px;width:1px;height:5px;background:#1e1e1e"></div>
<div class="a" style="left:1170px;top:218px;width:1px;height:5px;background:#1e1e1e"></div>
<div class="a" style="left:1172px;top:218px;width:1px;height:5px;background:#1e1e1e"></div>
<div class="a" style="left:1174px;top:218px;width:1px;height:5px;background:#1e1e1e"></div>
<div class="a" style="left:1176px;top:218px;width:1px;height:5px;background:#1e1e1e"></div>
<div class="a" style="left:1178px;top:218px;width:1px;height:5px;background:#1e1e1e"></div>
<div class="a" style="left:1180px;top:218px;width:1px;height:5px;background:#1e1e1e"></div>
<div class="a" style="left:1182px;top:218px;width:1px;height:5px;background:#1e1e1e"></div>
<div class="a" style="left:1184px;top:218px;width:1px;height:5px;background:#1e1e1e"></div>
<div class="a" style="left:1186px;top:218px;width:1px;height:5px;background:#1e1e1e"></div>
<div class="a" style="left:1159px;top:256px;width:37px;height:97px;background:#323232"></div>
<div class="a" style="left:1168px;top:259px;width:1px;height:5px;background:#1e1e1e"></div>
<div class="a" style="left:1170px;top:259px;width:1px;height:5px;background:#1e1e1e"></div>
<div class="a" style="left:1172px;top:259px;width:1px;height:5px;background:#1e1e1e"></div>
<div class="a" style="left:1174px;top:259px;width:1px;height:5px;background:#1e1e1e"></div>
<div class="a" style="left:1176px;top:259px;width:1px;height:5px;background:#1e1e1e"></div>
<div class="a" style="left:1178px;top:259px;width:1px;height:5px;background:#1e1e1e"></div>
<div class="a" style="left:1180px;top:259px;width:1px;height:5px;background:#1e1e1e"></div>
<div class="a" style="left:1182px;top:259px;width:1px;height:5px;background:#1e1e1e"></div>
<div class="a" style="left:1184px;top:259px;width:1px;height:5px;background:#1e1e1e"></div>
<div class="a" style="left:1186px;top:259px;width:1px;height:5px;background:#1e1e1e"></div>
<div class="a" style="left:1159px;top:354px;width:37px;height:39px;background:#323232"></div>
<div class="a" style="left:1168px;top:357px;width:1px;height:5px;background:#1e1e1e"></div>
<div class="a" style="left:1170px;top:357px;width:1px;height:5px;background:#1e1e1e"></div>
<div class="a" style="left:1172px;top:357px;width:1px;height:5px;background:#1e1e1e"></div>
<div class="a" style="left:1174px;top:357px;width:1px;height:5px;background:#1e1e1e"></div>
<div class="a" style="left:1176px;top:357px;width:1px;height:5px;background:#1e1e1e"></div>
<div class="a" style="left:1178px;top:357px;width:1px;height:5px;background:#1e1e1e"></div>
<div class="a" style="left:1180px;top:357px;width:1px;height:5px;background:#1e1e1e"></div>
<div class="a" style="left:1182px;top:357px;width:1px;height:5px;background:#1e1e1e"></div>
<div class="a" style="left:1184px;top:357px;width:1px;height:5px;background:#1e1e1e"></div>
<div class="a" style="left:1186px;top:357px;width:1px;height:5px;background:#1e1e1e"></div>
<div class="a" style="left:1159px;top:394px;width:37px;height:40px;background:#323232"></div>
<div class="a" style="left:1168px;top:397px;width:1px;height:5px;background:#1e1e1e"></div>
<div class="a" style="left:1170px;top:397px;width:1px;height:5px;background:#1e1e1e"></div>
<div class="a" style="left:1172px;top:397px;width:1px;height:5px;background:#1e1e1e"></div>
<div class="a" style="left:1174px;top:397px;width:1px;height:5px;background:#1e1e1e"></div>
<div class="a" style="left:1176px;top:397px;width:1px;height:5px;background:#1e1e1e"></div>
<div class="a" style="left:1178px;top:397px;width:1px;height:5px;background:#1e1e1e"></div>
<div class="a" style="left:1180px;top:397px;width:1px;height:5px;background:#1e1e1e"></div>
<div class="a" style="left:1182px;top:397px;width:1px;height:5px;background:#1e1e1e"></div>
<div class="a" style="left:1184px;top:397px;width:1px;height:5px;background:#1e1e1e"></div>
<div class="a" style="left:1186px;top:397px;width:1px;height:5px;background:#1e1e1e"></div>
<svg style="left:1169px;top:90px;" width="20" height="20" viewBox="0 0 20 20"><circle cx="10" cy="10" r="6" fill="none" stroke="#b4b4b4" stroke-width="1.8"/><circle cx="10" cy="10" r="2" fill="#b4b4b4"/><path d="M10 1V19M1 10H19M3.6 3.6L16.4 16.4M16.4 3.6L3.6 16.4" stroke="#b4b4b4" stroke-width="1.3"/></svg>
<svg style="left:1170px;top:120px;" width="16" height="16" viewBox="0 0 16 16"><circle cx="8" cy="8" r="7.5" fill="#b4b4b4"/><rect x="7" y="6.5" width="2" height="6" fill="#323232"/><circle cx="8" cy="4.3" r="1.2" fill="#323232"/><rect x="6" y="11.5" width="4" height="1.3" fill="#323232"/></svg>
<svg style="left:1169px;top:159px;" width="20" height="20" viewBox="0 0 20 20"><circle cx="10" cy="10" r="6.5" fill="#b4b4b4"/><circle cx="10" cy="10" r="8.5" fill="none" stroke="#b4b4b4" stroke-width="1.2" stroke-dasharray="2 1.5"/></svg>
<svg style="left:1170px;top:188px;" width="18" height="18" viewBox="0 0 18 18"><rect x="5.5" y="1.5" width="11" height="11" fill="none" stroke="#b4b4b4" stroke-width="1.4"/><rect x="1.5" y="9.5" width="7" height="7" fill="#323232" stroke="#b4b4b4" stroke-width="1.4"/><rect x="4" y="12" width="4" height="4" fill="#b4b4b4"/></svg>
<svg style="left:1169px;top:229px;" width="20" height="20" viewBox="0 0 20 20"><circle cx="8" cy="8" r="6.5" fill="#b4b4b4"/><circle cx="12" cy="12" r="6" fill="#7a7a7a" stroke="#b4b4b4" stroke-width="1.3"/></svg>
<svg style="left:1170px;top:270px;" width="18" height="18" viewBox="0 0 18 18"><rect x="3" y="3" width="12" height="12" fill="none" stroke="#b4b4b4" stroke-width="1.2" stroke-dasharray="2 1.4"/><rect x="1" y="1" width="3" height="3" fill="#b4b4b4"/><rect x="14" y="1" width="3" height="3" fill="#b4b4b4"/><rect x="1" y="14" width="3" height="3" fill="#b4b4b4"/><rect x="14" y="14" width="3" height="3" fill="#b4b4b4"/><circle cx="9" cy="9" r="0.9" fill="#b4b4b4"/></svg>
<svg style="left:1170px;top:298px;" width="18" height="18" viewBox="0 0 18 18"><rect x="1" y="1" width="1.5" height="16" fill="#b4b4b4"/><rect x="4" y="3" width="8" height="5" fill="#b4b4b4"/><rect x="4" y="10" width="12" height="5" fill="#b4b4b4"/></svg>
<svg style="left:1170px;top:326px;" width="18" height="18" viewBox="0 0 18 18"><rect x="1" y="1" width="10" height="10" fill="#b4b4b4"/><rect x="6" y="6" width="11" height="11" fill="#b4b4b4"/><rect x="6" y="6" width="5" height="5" fill="#5a5a5a"/></svg>
<svg style="left:0px;top:0px;" width="1200" height="440" viewBox="0 0 1200 440"><path d="M1178.5 370H1171V384H1185V376.5" stroke="#b4b4b4" stroke-width="2" fill="none"/><path d="M1181 375.5L1185.5 371" stroke="#b4b4b4" stroke-width="2.2"/><path d="M1180.2 367H1188V374.8Z" fill="#b4b4b4"/></svg>
<svg style="left:0px;top:0px;" width="1200" height="440" viewBox="0 0 1200 440"><path d="M1178.5 408.8L1187.2 414.6L1178.5 420.4L1169.8 414.6Z" fill="#b4b4b4"/><path d="M1169.8 418.2L1178.5 423.4L1187.2 418.2V420.8L1178.5 426.4L1169.8 420.8Z" fill="#b4b4b4"/></svg>
<div class="a" style="left:1159px;top:435px;width:37px;height:435px;background:#313131"></div>
<div class="a" style="left:1199px;top:77px;width:240px;height:27px;background:#282828"></div>
<div class="a" style="left:1199px;top:77px;width:50px;height:27px;background:#323232"></div>
<svg style="left:1203.5px;top:86px;" width="6" height="10" viewBox="0 0 6 10"><path d="M0.8 3.8L3 1L5.2 3.8M0.8 6.2L3 9L5.2 6.2" stroke="#a0a0a0" stroke-width="1.3" fill="none"/></svg>
<div class="t" style="left:1214px;top:86px;font-size:10px;font-weight:bold;color:#f0f0f0">Color</div>
<svg style="left:1423px;top:86px;" width="11" height="8" viewBox="0 0 11 8"><path d="M0 0.5H11M0 2.5H11M0 4.5H11M0 6.5H11" stroke="#c8c8c8" stroke-width="1"/></svg>
<div class="a" style="left:1199px;top:104px;width:240px;height:64px;background:#323232"></div>
<div class="a" style="left:1204px;top:113px;width:40px;height:14px;background:#1e1e1e"></div>
<svg style="left:1205px;top:114px;" width="13" height="12" viewBox="0 0 13 12"><rect width="13" height="12" fill="#fff"/><path d="M0.5 11.5L12 0.5" stroke="#f00" stroke-width="1.6"/></svg>
<div class="a" style="left:1218px;top:114px;width:13px;height:12px;background:#000"></div>
<div class="a" style="left:1231px;top:114px;width:12px;height:12px;background:#fff"></div>
<div class="t" style="left:1352px;top:115px;font-size:10px;color:#a0a0a0">#</div>
<div class="a" style="left:1363px;top:110px;width:60px;height:20px;background:#262626;border:1px solid #3a3a3a;border-radius:3px"></div>
<div class="t" style="left:1369px;top:115px;font-size:10px;color:#e0e0e0;letter-spacing:-0.3px">333333</div>
<div class="a" style="left:1205px;top:138px;width:216px;height:24px;background:linear-gradient(180deg,rgba(255,255,255,1) 0%,rgba(255,255,255,0) 50%,rgba(0,0,0,0) 50%,rgba(0,0,0,1) 100%),linear-gradient(90deg,#f00 0%,#ff0 17%,#0f0 33%,#0ff 50%,#00f 67%,#f0f 83%,#f00 100%);border:1px solid #1a1a1a"></div>
<div class="a" style="left:1199px;top:171px;width:240px;height:27px;background:#282828"></div>
<div class="a" style="left:1199px;top:171px;width:61px;height:27px;background:#323232"></div>
<div class="t" style="left:1208px;top:180px;font-size:10px;font-weight:bold;color:#f0f0f0;letter-spacing:-0.2px">Swatches</div>
<div class="a" style="left:1317px;top:171px;width:1px;height:27px;background:#222"></div>
<div class="t" style="left:1269px;top:180px;font-size:10px;font-weight:bold;color:#a0a0a0;letter-spacing:-0.2px">Libraries</div>
<svg style="left:1423px;top:180px;" width="11" height="8" viewBox="0 0 11 8"><path d="M0 0.5H11M0 2.5H11M0 4.5H11M0 6.5H11" stroke="#c8c8c8" stroke-width="1"/></svg>
<div class="a" style="left:1199px;top:198px;width:240px;height:294px;background:#323232"></div>
<svg style="left:1204px;top:204px;" width="31" height="31" viewBox="0 0 31 31"><rect x="10.5" y="10.5" width="19" height="19" fill="#fff" stroke="#111" stroke-width="1"/><rect x="15.5" y="15.5" width="9" height="9" fill="#333" stroke="#111"/><path d="M11 29L29 11" stroke="#f00" stroke-width="2"/><rect x="0.5" y="0.5" width="19" height="19" fill="#333" stroke="#111"/><rect x="1.8" y="1.8" width="16.4" height="16.4" fill="none" stroke="#fff" stroke-width="1.6"/></svg>
<div class="a" style="left:1385px;top:204px;width:48px;height:24px;background:#2e2e2e;border:1px solid #2a2a2a;border-radius:3px"></div>
<div class="a" style="left:1410px;top:205px;width:22px;height:22px;background:#1e1e1e"></div>
<svg style="left:1391px;top:209px;" width="13" height="14" viewBox="0 0 13 14"><path d="M0 1H12M0 5H12M0 9H12M0 13H12" stroke="#c0c0c0" stroke-width="2"/></svg>
<svg style="left:1415px;top:209px;" width="14" height="14" viewBox="0 0 14 14"><rect x="0" y="0" width="4" height="4" fill="#c0c0c0"/><rect x="0" y="5" width="4" height="4" fill="#c0c0c0"/><rect x="0" y="10" width="4" height="4" fill="#c0c0c0"/><rect x="5" y="0" width="4" height="4" fill="#c0c0c0"/><rect x="5" y="5" width="4" height="4" fill="#c0c0c0"/><rect x="5" y="10" width="4" height="4" fill="#c0c0c0"/><rect x="10" y="0" width="4" height="4" fill="#c0c0c0"/><rect x="10" y="5" width="4" height="4" fill="#c0c0c0"/><rect x="10" y="10" width="4" height="4" fill="#c0c0c0"/></svg>
<div class="a" style="left:1204px;top:239px;width:230px;height:234px;border:1px solid #3a3a3a"></div>
<div class="a" style="left:1205px;top:240px;width:216px;height:100px;background:#323232"></div>
<svg style="left:1205px;top:240px;" width="13" height="13" viewBox="0 0 13 13"><rect width="13" height="13" fill="#fff"/><path d="M0.5 12.5L12.5 0.5" stroke="#f00" stroke-width="1.6"/></svg>
<svg style="left:1219px;top:240px;" width="13" height="13" viewBox="0 0 13 13"><rect width="13" height="13" fill="#f0f0f0"/><circle cx="6.5" cy="6.5" r="4" fill="none" stroke="#555" stroke-width="0.8"/><circle cx="6.5" cy="6.5" r="1.3" fill="none" stroke="#555" stroke-width="0.8"/><path d="M6.5 0V13M0 6.5H13" stroke="#555" stroke-width="0.8"/></svg>
<div class="a" style="left:1233px;top:240px;width:13px;height:13px;background:#ffffff"></div>
<div class="a" style="left:1247px;top:240px;width:13px;height:13px;background:#000000"></div>
<div class="a" style="left:1261px;top:240px;width:13px;height:13px;background:#ff0000"></div>
<div class="a" style="left:1275px;top:240px;width:13px;height:13px;background:#ffff33"></div>
<div class="a" style="left:1289px;top:240px;width:13px;height:13px;background:#22ff33"></div>
<div class="a" style="left:1303px;top:240px;width:13px;height:13px;background:#22ffff"></div>
<div class="a" style="left:1317px;top:240px;width:13px;height:13px;background:#0028ff"></div>
<div class="a" style="left:1331px;top:240px;width:13px;height:13px;background:#ff22ff"></div>
<div class="a" style="left:1345px;top:240px;width:13px;height:13px;background:#b8283a"></div>
<div class="a" style="left:1359px;top:240px;width:13px;height:13px;background:#e81f2e"></div>
<div class="a" style="left:1373px;top:240px;width:13px;height:13px;background:#ef5a32"></div>
<div class="a" style="left:1387px;top:240px;width:13px;height:13px;background:#f6923a"></div>
<div class="a" style="left:1401px;top:240px;width:13px;height:13px;background:#f8ad4e"></div>
<div class="a" style="left:1205px;top:254px;width:13px;height:13px;background:#fde741"></div>
<div class="a" style="left:1219px;top:254px;width:13px;height:13px;background:#d9df3d"></div>
<div class="a" style="left:1233px;top:254px;width:13px;height:13px;background:#8bc34a"></div>
<div class="a" style="left:1247px;top:254px;width:13px;height:13px;background:#3bac50"></div>
<div class="a" style="left:1261px;top:254px;width:13px;height:13px;background:#1a8a4a"></div>
<div class="a" style="left:1275px;top:254px;width:13px;height:13px;background:#136b3c"></div>
<div class="a" style="left:1289px;top:254px;width:13px;height:13px;background:#2db07a"></div>
<div class="a" style="left:1303px;top:254px;width:13px;height:13px;background:#1fa79a"></div>
<div class="a" style="left:1317px;top:254px;width:13px;height:13px;background:#33a7dd"></div>
<div class="a" style="left:1331px;top:254px;width:13px;height:13px;background:#1670b8"></div>
<div class="a" style="left:1345px;top:254px;width:13px;height:13px;background:#2f3a8f"></div>
<div class="a" style="left:1359px;top:254px;width:13px;height:13px;background:#231f63"></div>
<div class="a" style="left:1373px;top:254px;width:13px;height:13px;background:#65328f"></div>
<div class="a" style="left:1387px;top:254px;width:13px;height:13px;background:#8f2a8a"></div>
<div class="a" style="left:1401px;top:254px;width:13px;height:13px;background:#9a1a5e"></div>
<div class="a" style="left:1205px;top:268px;width:13px;height:13px;background:#d41b5a"></div>
<div class="a" style="left:1219px;top:268px;width:13px;height:13px;background:#e6257b"></div>
<div class="a" style="left:1233px;top:268px;width:13px;height:13px;background:#c6b299"></div>
<div class="a" style="left:1247px;top:268px;width:13px;height:13px;background:#9c8877"></div>
<div class="a" style="left:1261px;top:268px;width:13px;height:13px;background:#776657"></div>
<div class="a" style="left:1275px;top:268px;width:13px;height:13px;background:#594a41"></div>
<div class="a" style="left:1289px;top:268px;width:13px;height:13px;background:#c49a6c"></div>
<div class="a" style="left:1303px;top:268px;width:13px;height:13px;background:#a57b55"></div>
<div class="a" style="left:1317px;top:268px;width:13px;height:13px;background:#8a603e"></div>
<div class="a" style="left:1331px;top:268px;width:13px;height:13px;background:#744c2b"></div>
<div class="a" style="left:1345px;top:268px;width:13px;height:13px;background:#5c3a1b"></div>
<div class="a" style="left:1359px;top:268px;width:13px;height:13px;background:#3f2718"></div>
<div class="a" style="left:1373px;top:268px;width:13px;height:13px;background:linear-gradient(90deg,#fff,#000)"></div>
<div class="a" style="left:1387px;top:268px;width:13px;height:13px;background:linear-gradient(90deg,#d8ecfb,#1773b8)"></div>
<div class="a" style="left:1401px;top:268px;width:13px;height:13px;background:repeating-conic-gradient(#f0a0c0 0 25%,#fbe0ea 0 50%) 0 0/4px 4px"></div>
<div class="a" style="left:1205px;top:282px;width:13px;height:13px;background:radial-gradient(circle,#fff 0,#f9a54a 45%,#f47f20 100%)"></div>
<div class="a" style="left:1219px;top:282px;width:13px;height:13px;background:repeating-conic-gradient(#ccc 0 25%,#fff 0 50%) 0 0/4px 4px;border-radius:0"></div>
<svg style="left:1219px;top:282px;" width="13" height="13" viewBox="0 0 13 13"><circle cx="6.5" cy="6.5" r="5.5" fill="none" stroke="#e6c24a" stroke-width="0.8"/></svg>
<div class="a" style="left:1233px;top:282px;width:13px;height:13px;background:radial-gradient(circle at 30% 40%,#8fb7e0 0,#2f6aa8 60%,#1d4f86 100%)"></div>
<div class="a" style="left:1247px;top:282px;width:13px;height:13px;background:radial-gradient(circle at 60% 40%,#f4e7a0 0,#a9c8dc 60%,#d8dcc0 100%)"></div>
<div class="a" style="left:1219px;top:298px;width:13px;height:13px;background:#000"></div>
<div class="a" style="left:1233px;top:298px;width:13px;height:13px;background:#222"></div>
<div class="a" style="left:1247px;top:298px;width:13px;height:13px;background:#333;border:1px solid #fff;box-shadow:inset 0 0 0 1px #000"></div>
<div class="a" style="left:1261px;top:298px;width:13px;height:13px;background:#4a4a4a"></div>
<div class="a" style="left:1275px;top:298px;width:13px;height:13px;background:#626262"></div>
<div class="a" style="left:1289px;top:298px;width:13px;height:13px;background:#7b7b7b"></div>
<div class="a" style="left:1303px;top:298px;width:13px;height:13px;background:#959595"></div>
<div class="a" style="left:1317px;top:298px;width:13px;height:13px;background:#aeaeae"></div>
<div class="a" style="left:1331px;top:298px;width:13px;height:13px;background:#c8c8c8"></div>
<div class="a" style="left:1345px;top:298px;width:13px;height:13px;background:#e2e2e2"></div>
<div class="a" style="left:1359px;top:298px;width:13px;height:13px;background:#f2f2f2"></div>
<div class="a" style="left:1219px;top:314px;width:13px;height:13px;background:#3fa9f5"></div>
<div class="a" style="left:1233px;top:314px;width:13px;height:13px;background:#7ac943"></div>
<div class="a" style="left:1247px;top:314px;width:13px;height:13px;background:#ff931e"></div>
<div class="a" style="left:1261px;top:314px;width:13px;height:13px;background:#ff1d25"></div>
<div class="a" style="left:1275px;top:314px;width:13px;height:13px;background:#ff7bac"></div>
<div class="a" style="left:1289px;top:314px;width:13px;height:13px;background:#bdccd4"></div>
<svg style="left:1205px;top:298px;" width="13" height="13" viewBox="0 0 13 13"><rect x="1" y="4" width="11" height="7" fill="#b4b4b4"/><rect x="1" y="2" width="4" height="1.2" fill="#b4b4b4"/></svg>
<svg style="left:1205px;top:314px;" width="13" height="13" viewBox="0 0 13 13"><rect x="1" y="4" width="11" height="7" fill="#b4b4b4"/><rect x="1" y="2" width="4" height="1.2" fill="#b4b4b4"/></svg>
<svg style="left:1209px;top:476px;" width="14" height="12" viewBox="0 0 14 12"><rect x="0" y="1" width="2" height="9" fill="#b4b4b4"/><rect x="3" y="1" width="2" height="9" fill="#b4b4b4"/><path d="M6 1L9 10" stroke="#b4b4b4" stroke-width="2"/><path d="M10 10H13L11.5 12Z" fill="#b4b4b4"/></svg>
<svg style="left:1237px;top:476px;" width="12" height="12" viewBox="0 0 12 12"><circle cx="5" cy="6" r="3.3" fill="none" stroke="#b4b4b4" stroke-width="1.3"/><circle cx="5" cy="6" r="1" fill="#b4b4b4"/><path d="M7 4L11 1M7 8L11 11" stroke="#b4b4b4" stroke-width="1.3"/></svg>
<svg style="left:1259px;top:476px;" width="20" height="12" viewBox="0 0 20 12"><path d="M8 10H17C20 10 20 5 17 5C16 2 12 1 10 4C7 3 6 6 7 8Z" fill="#b4b4b4"/><path d="M1 9H8M6 7L8 9L6 11" stroke="#b4b4b4" stroke-width="1.3" fill="none"/></svg>
<svg style="left:1294px;top:476px;" width="14" height="12" viewBox="0 0 14 12"><rect x="0.0" y="0.0" width="2.5" height="2.5" fill="#b4b4b4"/><rect x="0.0" y="3.3" width="2.5" height="2.5" fill="#b4b4b4"/><rect x="0.0" y="6.6" width="2.5" height="2.5" fill="#b4b4b4"/><rect x="3.3" y="0.0" width="2.5" height="2.5" fill="#b4b4b4"/><rect x="3.3" y="3.3" width="2.5" height="2.5" fill="#b4b4b4"/><rect x="3.3" y="6.6" width="2.5" height="2.5" fill="#b4b4b4"/><rect x="6.6" y="0.0" width="2.5" height="2.5" fill="#b4b4b4"/><rect x="6.6" y="3.3" width="2.5" height="2.5" fill="#b4b4b4"/><rect x="6.6" y="6.6" width="2.5" height="2.5" fill="#b4b4b4"/><path d="M11 9H14L12.5 11Z" fill="#b4b4b4"/></svg>
<svg style="left:1321px;top:476px;" width="12" height="12" viewBox="0 0 12 12"><rect x="0.5" y="0.5" width="11" height="11" fill="none" stroke="#b4b4b4"/><path d="M0.5 3H11.5" stroke="#b4b4b4"/><path d="M3 5.5H9M3 7.5H9M3 9.5H9" stroke="#b4b4b4"/></svg>
<svg style="left:1346px;top:476px;" width="14" height="11" viewBox="0 0 14 11"><path d="M0 1H5L6 2H14V11H0Z" fill="#b4b4b4"/></svg>
<svg style="left:1374px;top:475px;" width="12" height="13" viewBox="0 0 12 13"><path d="M3 1H11V12H3V5Z" fill="#b4b4b4"/><path d="M1 5H5V1" fill="#323232"/><path d="M0 4L4 0" stroke="#323232" stroke-width="1.5"/></svg>
<svg style="left:1400px;top:475px;" width="12" height="14" viewBox="0 0 12 14"><path d="M1 2H11M4 2V0.5H8V2" stroke="#b4b4b4" stroke-width="1.3" fill="none"/><path d="M2 4H10V13H2Z" fill="none" stroke="#b4b4b4" stroke-width="1.3"/><path d="M4.5 5.5V11.5M7.5 5.5V11.5" stroke="#b4b4b4"/></svg>
<div class="a" style="left:1199px;top:495px;width:240px;height:27px;background:#282828"></div>
<div class="a" style="left:1199px;top:495px;width:63px;height:27px;background:#323232"></div>
<svg style="left:1203.5px;top:504px;" width="6" height="10" viewBox="0 0 6 10"><path d="M0.8 3.8L3 1L5.2 3.8M0.8 6.2L3 9L5.2 6.2" stroke="#a0a0a0" stroke-width="1.3" fill="none"/></svg>
<div class="t" style="left:1214px;top:504px;font-size:10px;font-weight:bold;color:#f0f0f0;letter-spacing:-0.2px">Gradient</div>
<svg style="left:1423px;top:504px;" width="11" height="8" viewBox="0 0 11 8"><path d="M0 0.5H11M0 2.5H11M0 4.5H11M0 6.5H11" stroke="#c8c8c8" stroke-width="1"/></svg>
<div class="a" style="left:1199px;top:526px;width:240px;height:27px;background:#282828"></div>
<div class="a" style="left:1253px;top:526px;width:55px;height:27px;background:#323232"></div>
<div class="a" style="left:1308px;top:526px;width:1px;height:27px;background:#222"></div>
<div class="a" style="left:1365px;top:526px;width:1px;height:27px;background:#222"></div>
<div class="t" style="left:1208px;top:535px;font-size:10px;font-weight:bold;color:#a0a0a0;letter-spacing:-0.2px">Brushes</div>
<svg style="left:1257.5px;top:535px;" width="6" height="10" viewBox="0 0 6 10"><path d="M0.8 3.8L3 1L5.2 3.8M0.8 6.2L3 9L5.2 6.2" stroke="#a0a0a0" stroke-width="1.3" fill="none"/></svg>
<div class="t" style="left:1268px;top:535px;font-size:10px;font-weight:bold;color:#f0f0f0;letter-spacing:-0.2px">Stroke</div>
<div class="t" style="left:1316px;top:535px;font-size:10px;font-weight:bold;color:#a0a0a0;letter-spacing:-0.2px">Symbols</div>
<svg style="left:1423px;top:535px;" width="11" height="8" viewBox="0 0 11 8"><path d="M0 0.5H11M0 2.5H11M0 4.5H11M0 6.5H11" stroke="#c8c8c8" stroke-width="1"/></svg>
<div class="a" style="left:1199px;top:553px;width:240px;height:317px;background:#323232"></div>
<div class="t" style="left:1226px;top:566px;font-size:10px;color:#c0c0c0;letter-spacing:-0.2px">Weight:</div>
<div class="a" style="left:1264px;top:559px;width:87px;height:20px;background:#262626;border:1px solid #3a3a3a;border-radius:2px"></div>
<div class="a" style="left:1282px;top:560px;width:1px;height:18px;background:#3a3a3a"></div>
<div class="a" style="left:1333px;top:560px;width:1px;height:18px;background:#3a3a3a"></div>
<svg style="left:1269px;top:561px;" width="9" height="16" viewBox="0 0 9 16"><path d="M1 5L4.5 1.5L8 5M1 11L4.5 14.5L8 11" stroke="#c8c8c8" stroke-width="1.3" fill="none"/></svg>
<svg style="left:1337px;top:567px;" width="8" height="5" viewBox="0 0 8 5"><path d="M0.7 0.7L4.0 4.2L7.3 0.7" stroke="#d0d0d0" stroke-width="1.4" fill="none"/></svg>
<div class="t" style="left:1240px;top:592px;font-size:10px;color:#6a6a6a;letter-spacing:-0.2px">Cap:</div>
<div class="a" style="left:1264px;top:585px;width:68px;height:21px;border:1px solid #3c3c3c;border-radius:3px"></div>
<div class="a" style="left:1286px;top:586px;width:1px;height:19px;background:#3c3c3c"></div>
<div class="a" style="left:1309px;top:586px;width:1px;height:19px;background:#3c3c3c"></div>
<div class="t" style="left:1227px;top:619px;font-size:10px;color:#6a6a6a;letter-spacing:-0.2px">Corner:</div>
<div class="a" style="left:1264px;top:612px;width:68px;height:21px;border:1px solid #3c3c3c;border-radius:3px"></div>
<div class="a" style="left:1286px;top:613px;width:1px;height:19px;background:#3c3c3c"></div>
<div class="a" style="left:1309px;top:613px;width:1px;height:19px;background:#3c3c3c"></div>
<div class="t" style="left:1204px;top:646px;font-size:10px;color:#6a6a6a;letter-spacing:-0.2px">Align Stroke:</div>
<div class="a" style="left:1264px;top:639px;width:68px;height:21px;border:1px solid #3c3c3c;border-radius:3px"></div>
<div class="a" style="left:1286px;top:640px;width:1px;height:19px;background:#3c3c3c"></div>
<div class="a" style="left:1309px;top:640px;width:1px;height:19px;background:#3c3c3c"></div>
<svg style="left:1269px;top:589px;" width="14" height="14" viewBox="0 0 14 14"><path d="M5 1H13V13H5Z" fill="#5a5a5a"/><path d="M1 5H7V9H1Z" fill="none" stroke="#5a5a5a"/></svg>
<svg style="left:1291px;top:589px;" width="14" height="14" viewBox="0 0 14 14"><path d="M13 1H7A6 6 0 0 0 7 13H13Z" fill="#5a5a5a"/><rect x="7" y="5" width="6" height="4" fill="#323232"/></svg>
<svg style="left:1314px;top:589px;" width="14" height="14" viewBox="0 0 14 14"><path d="M1 1H13V13H1Z" fill="#5a5a5a"/><rect x="5" y="5" width="8" height="4" fill="#323232"/></svg>
<svg style="left:1269px;top:616px;" width="14" height="14" viewBox="0 0 14 14"><path d="M1 1H13V5H5V13H1Z" fill="#5a5a5a"/><path d="M7 7H13V9H9V13H7Z" fill="#5a5a5a"/></svg>
<svg style="left:1291px;top:616px;" width="14" height="14" viewBox="0 0 14 14"><path d="M7 1H13V5H7A2 2 0 0 0 5 7V13H1V7A6 6 0 0 1 7 1Z" fill="#5a5a5a"/><path d="M7 7H13V9H9V13H7Z" fill="#5a5a5a"/></svg>
<svg style="left:1314px;top:616px;" width="14" height="14" viewBox="0 0 14 14"><path d="M5 1H13V5H7L5 7V13H1V5Z" fill="#5a5a5a"/><path d="M7 7H13V9H9V13H7Z" fill="#5a5a5a"/></svg>
<svg style="left:1269px;top:643px;" width="14" height="14" viewBox="0 0 14 14"><path d="M1 1H4V10H13V13H1Z" fill="#5a5a5a"/><path d="M6 1V8H13" stroke="#5a5a5a" fill="none"/></svg>
<svg style="left:1291px;top:643px;" width="14" height="14" viewBox="0 0 14 14"><path d="M4 1H7V8H13V11H4Z" fill="#5a5a5a"/><path d="M1 13H13M1 13V6H4" stroke="#5a5a5a" fill="none"/></svg>
<svg style="left:1314px;top:643px;" width="14" height="14" viewBox="0 0 14 14"><path d="M1 1H7V7H13V13H1Z" fill="#5a5a5a"/><path d="M8 1V6H13" stroke="#5a5a5a" fill="none"/></svg>
<div class="t" style="left:1359px;top:619px;font-size:10px;color:#6a6a6a;letter-spacing:-0.2px">Limit:</div>
<div class="a" style="left:1387px;top:612px;width:39px;height:21px;background:#383838"></div>
<div class="t" style="left:1428px;top:620px;font-size:10px;color:#6a6a6a">x</div>
<div class="a" style="left:1204px;top:666px;width:230px;height:2px;background:#262626"></div>
<div class="a" style="left:1205px;top:677px;width:12px;height:12px;background:#b4b4b4;border-radius:2px"></div>
<div class="a" style="left:1207px;top:682px;width:8px;height:2px;background:#333"></div>
<div class="t" style="left:1222px;top:679px;font-size:10px;color:#e0e0e0;letter-spacing:-0.2px">Dashed Line</div>
<div class="a" style="left:1357px;top:673px;width:77px;height:21px;border:1px solid #3c3c3c;border-radius:3px"></div>
<div class="a" style="left:1395px;top:674px;width:1px;height:19px;background:#3c3c3c"></div>
<svg style="left:1361px;top:677px;" width="30" height="13" viewBox="0 0 30 13"><path d="M1 11V8M1 12H6M9 12H14M14 1H20M5 1.5H11M22 1H28M28 1V5M26 12H23" stroke="#5a5a5a" stroke-width="1.6" fill="none"/></svg>
<svg style="left:1399px;top:677px;" width="32" height="13" viewBox="0 0 32 13"><path d="M1 6V1H5M1 8V12H5M11 1H19M11 12H19M25 1H30V6M25 12H30V8" stroke="#5a5a5a" stroke-width="1.6" fill="none"/></svg>
<div class="a" style="left:1205px;top:700px;width:34px;height:21px;background:#383838;border-radius:2px"></div>
<div class="t" style="left:1211px;top:724px;font-size:10px;color:#6a6a6a">dash</div>
<div class="a" style="left:1243px;top:700px;width:34px;height:21px;background:#383838;border-radius:2px"></div>
<div class="t" style="left:1252px;top:724px;font-size:10px;color:#6a6a6a">gap</div>
<div class="a" style="left:1281px;top:700px;width:34px;height:21px;background:#383838;border-radius:2px"></div>
<div class="t" style="left:1287px;top:724px;font-size:10px;color:#6a6a6a">dash</div>
<div class="a" style="left:1320px;top:700px;width:34px;height:21px;background:#383838;border-radius:2px"></div>
<div class="t" style="left:1329px;top:724px;font-size:10px;color:#6a6a6a">gap</div>
<div class="a" style="left:1359px;top:700px;width:34px;height:21px;background:#383838;border-radius:2px"></div>
<div class="t" style="left:1365px;top:724px;font-size:10px;color:#6a6a6a">dash</div>
<div class="a" style="left:1398px;top:700px;width:34px;height:21px;background:#383838;border-radius:2px"></div>
<div class="t" style="left:1407px;top:724px;font-size:10px;color:#6a6a6a">gap</div>
<div class="a" style="left:1204px;top:739px;width:230px;height:2px;background:#262626"></div>
<div class="t" style="left:1205px;top:754px;font-size:10px;color:#6a6a6a;letter-spacing:-0.4px">Arrowheads:</div>
<div class="a" style="left:1264px;top:747px;width:57px;height:21px;background:#383838;border-radius:2px"></div>
<div class="a" style="left:1264px;top:747px;width:38px;height:21px;background:#6a6a6a"></div>
<svg style="left:1308px;top:755px;" width="8" height="5" viewBox="0 0 8 5"><path d="M0.7 0.7L4.0 4.2L7.3 0.7" stroke="#5a5a5a" stroke-width="1.4" fill="none"/></svg>
<div class="a" style="left:1327px;top:747px;width:57px;height:21px;background:#383838;border-radius:2px"></div>
<div class="a" style="left:1327px;top:747px;width:38px;height:21px;background:#6a6a6a"></div>
<svg style="left:1371px;top:755px;" width="8" height="5" viewBox="0 0 8 5"><path d="M0.7 0.7L4.0 4.2L7.3 0.7" stroke="#5a5a5a" stroke-width="1.4" fill="none"/></svg>
<svg style="left:1415px;top:752px;" width="15" height="13" viewBox="0 0 15 13"><path d="M1 4H13M10 1L13 4L10 7M14 9H2M5 6L2 9L5 12" stroke="#5a5a5a" stroke-width="1.6" fill="none"/></svg>
<div class="t" style="left:1234px;top:784px;font-size:10px;color:#6a6a6a;letter-spacing:-0.2px">Scale:</div>
<div class="a" style="left:1264px;top:777px;width:57px;height:21px;background:#383838;border-radius:2px"></div>
<div class="a" style="left:1282px;top:777px;width:1px;height:21px;background:#2e2e2e"></div>
<svg style="left:1269px;top:780px;" width="9" height="16" viewBox="0 0 9 16"><path d="M1 5L4.5 1.5L8 5M1 11L4.5 14.5L8 11" stroke="#5a5a5a" stroke-width="1.3" fill="none"/></svg>
<div class="t" style="left:1286px;top:784px;font-size:10px;color:#6a6a6a;letter-spacing:-0.3px">100%</div>
<div class="a" style="left:1327px;top:777px;width:57px;height:21px;background:#383838;border-radius:2px"></div>
<div class="a" style="left:1345px;top:777px;width:1px;height:21px;background:#2e2e2e"></div>
<svg style="left:1332px;top:780px;" width="9" height="16" viewBox="0 0 9 16"><path d="M1 5L4.5 1.5L8 5M1 11L4.5 14.5L8 11" stroke="#5a5a5a" stroke-width="1.3" fill="none"/></svg>
<div class="t" style="left:1349px;top:784px;font-size:10px;color:#6a6a6a;letter-spacing:-0.3px">100%</div>
<svg style="left:1414px;top:779px;" width="15" height="17" viewBox="0 0 15 17"><path d="M4 8V4A3 3 0 0 1 10 4V8M4 10V13A3 3 0 0 0 10 13V10M1 1L14 16" stroke="#5a5a5a" stroke-width="1.5" fill="none"/></svg>
<div class="t" style="left:1236px;top:813px;font-size:10px;color:#6a6a6a;letter-spacing:-0.2px">Align:</div>
<div class="a" style="left:1264px;top:806px;width:45px;height:22px;border:1px solid #3c3c3c;border-radius:3px"></div>
<div class="a" style="left:1286px;top:807px;width:1px;height:20px;background:#3c3c3c"></div>
<svg style="left:1268px;top:811px;" width="14" height="12" viewBox="0 0 14 12"><path d="M1 2H7M7 0V4M1 8H11" stroke="#5a5a5a" stroke-width="1.4" fill="none"/><path d="M10 5L14 8L10 11Z" fill="#5a5a5a"/></svg>
<svg style="left:1291px;top:811px;" width="14" height="12" viewBox="0 0 14 12"><path d="M1 2H12M12 0V4M1 8H11" stroke="#5a5a5a" stroke-width="1.4" fill="none"/><path d="M10 5L14 8L10 11Z" fill="#5a5a5a"/></svg>
<div class="a" style="left:1204px;top:833px;width:230px;height:2px;background:#262626"></div>
<div class="t" style="left:1230px;top:848px;font-size:10px;color:#6a6a6a;letter-spacing:-0.2px">Profile:</div>
<div class="a" style="left:1264px;top:841px;width:107px;height:21px;background:#383838;border-radius:2px"></div>
<div class="a" style="left:1264px;top:841px;width:88px;height:21px;background:#6a6a6a"></div>
<svg style="left:1358px;top:849px;" width="8" height="5" viewBox="0 0 8 5"><path d="M0.7 0.7L4.0 4.2L7.3 0.7" stroke="#5a5a5a" stroke-width="1.4" fill="none"/></svg>
<svg style="left:1390px;top:845px;" width="15" height="14" viewBox="0 0 15 14"><path d="M7.5 0V14" stroke="#5a5a5a" stroke-dasharray="1.5 1"/><path d="M6 7L1 2V12Z" fill="none" stroke="#5a5a5a"/><path d="M9 7L14 2V12Z" fill="#5a5a5a"/></svg>
<svg style="left:1414px;top:845px;" width="15" height="14" viewBox="0 0 15 14"><path d="M0 7H15" stroke="#5a5a5a" stroke-dasharray="1.5 1"/><path d="M7.5 6L2.5 1H12.5Z" fill="#5a5a5a"/><path d="M7.5 8L2.5 13H12.5Z" fill="none" stroke="#5a5a5a"/></svg>
<div class="a" style="left:0px;top:869px;width:1439px;height:1px;background:#1f1f1f"></div>
<svg style="left:14px;top:864px;overflow:hidden" width="26" height="6" viewBox="0 0 26 6"><defs><linearGradient id="orb" x1="0" y1="0" x2="0" y2="1"><stop offset="0" stop-color="#e8f0f4"/><stop offset="1" stop-color="#9fb8c8"/></linearGradient></defs><ellipse cx="13" cy="14" rx="11.5" ry="13" fill="url(#orb)" stroke="#0b3d6e" stroke-width="1.4"/></svg></body></html>
